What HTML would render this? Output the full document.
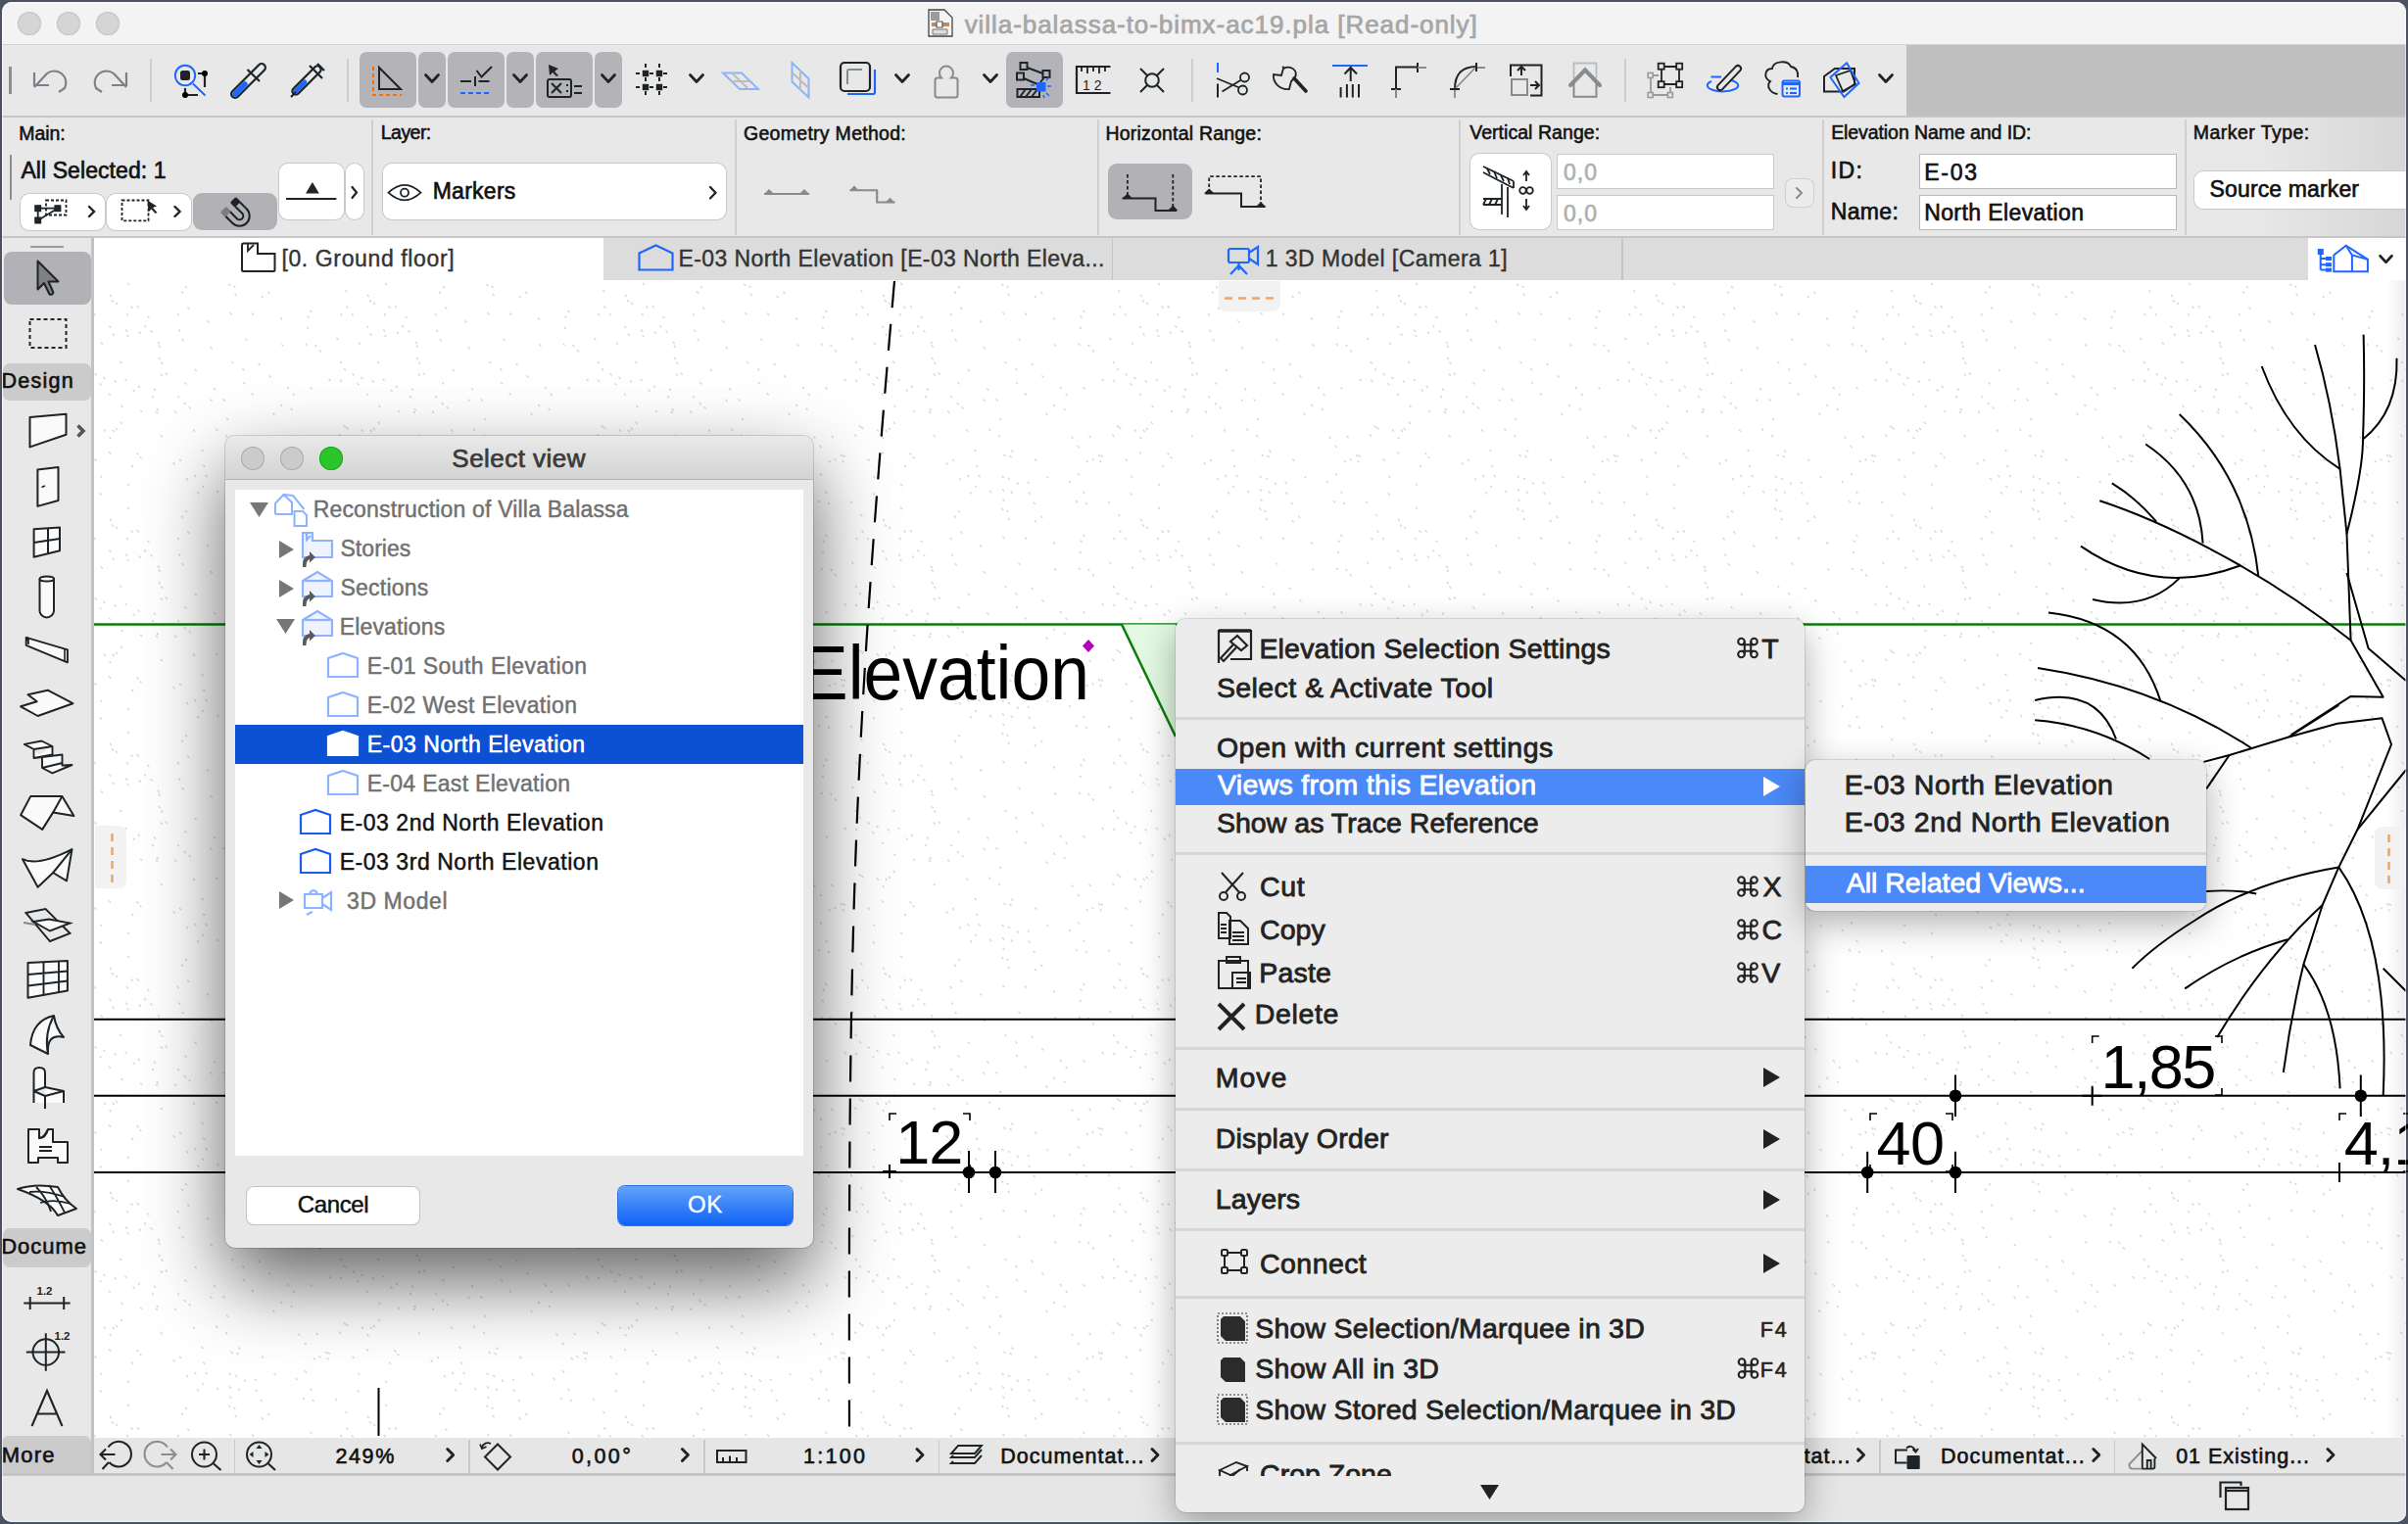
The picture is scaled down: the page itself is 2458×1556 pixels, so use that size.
<!DOCTYPE html>
<html><head><meta charset="utf-8"><title>ArchiCAD</title>
<style>
html,body{margin:0;padding:0;width:2458px;height:1556px;overflow:hidden;background:#4b5363;}
body{position:relative;font-family:"Liberation Sans",sans-serif;}
svg{overflow:visible}
</style></head><body>
<div style="position:absolute;left:2px;top:2px;width:2454px;height:1552px;border-radius:10px;overflow:hidden;background:#e6e6e6;">
<div style="position:absolute;left:0px;top:0px;width:2454px;height:43px;background:#f3f3f3;"></div>
<div style="position:absolute;left:0px;top:43px;width:2454px;height:1px;background:#d2d2d2;"></div>
<div style="position:absolute;left:0px;top:44px;width:2454px;height:72px;background:#e8e8e8;"></div>
<div style="position:absolute;left:1944px;top:44px;width:510px;height:72px;background:#bfbfbf;"></div>
<div style="position:absolute;left:0px;top:116px;width:2454px;height:2px;background:#c6c6c6;"></div>
<div style="position:absolute;left:0px;top:118px;width:2454px;height:121px;background:#e8e8e8;"></div>
<div style="position:absolute;left:2300px;top:118px;width:154px;height:121px;background:linear-gradient(to right,#e8e8e8,#d6d6d6);"></div>
<div style="position:absolute;left:0px;top:239px;width:2454px;height:2px;background:#c6c6c6;"></div>
<div style="position:absolute;left:94px;top:241px;width:2360px;height:44px;background:#dcdcdc;"></div>
<div style="position:absolute;left:0px;top:241px;width:91px;height:1265px;background:#e8e8e8;"></div>
<div style="position:absolute;left:91px;top:241px;width:3px;height:1265px;background:#c3c3c3;"></div>
<div style="position:absolute;left:94px;top:284px;width:2360px;height:1182px;background:#ffffff;"></div>
<div style="position:absolute;left:94px;top:1466px;width:2360px;height:37px;background:#e6e6e6;"></div>
<div style="position:absolute;left:0px;top:1502px;width:2454px;height:3px;background:#c4c4c4;"></div>
<div style="position:absolute;left:0px;top:1505px;width:2454px;height:47px;background:#e6e6e6;"></div>
</div>
<div style="position:absolute;left:18px;top:12px;width:24px;height:24px;border-radius:50%;background:#d5d5d5;box-shadow:inset 0 0 0 1px #c3c3c3;"></div>
<div style="position:absolute;left:58px;top:12px;width:24px;height:24px;border-radius:50%;background:#d5d5d5;box-shadow:inset 0 0 0 1px #c3c3c3;"></div>
<div style="position:absolute;left:98px;top:12px;width:24px;height:24px;border-radius:50%;background:#d5d5d5;box-shadow:inset 0 0 0 1px #c3c3c3;"></div>
<svg style="position:absolute;left:947px;top:9px;" width="26" height="29" viewBox="0 0 26 29"><path d="M1 1H17L25 9V28H1Z" fill="#f4f4f4" stroke="#444" stroke-width="1.3"/><path d="M3 3H12V12H3Z" fill="#9a9a9a"/><path d="M4 14H22V18H4Z" fill="#c08a5a"/><path d="M9 13H15V19H9Z" fill="#fff" stroke="#555" stroke-width="1.2"/><path d="M5 21H20V26H5Z" fill="#ddd" stroke="#777" stroke-width="1"/></svg>
<div style="position:absolute;left:984.67px;top:11.59px;font-size:26px;line-height:26px;height:26px;white-space:nowrap;color:#a6a6a6;font-weight:normal;letter-spacing:0.950px;-webkit-text-stroke:0.73px #a6a6a6;">villa-balassa-to-bimx-ac19.pla [Read-only]</div>
<div style="position:absolute;left:152.5px;top:60px;width:2px;height:44px;background:#cdcdcd;"></div>
<div style="position:absolute;left:354px;top:60px;width:2px;height:44px;background:#cdcdcd;"></div>
<div style="position:absolute;left:1216px;top:60px;width:2px;height:44px;background:#cdcdcd;"></div>
<div style="position:absolute;left:1658px;top:60px;width:2px;height:44px;background:#cdcdcd;"></div>
<div style="position:absolute;left:9px;top:68px;width:2.5px;height:28px;background:#8e8e8e;"></div>
<div style="position:absolute;left:367px;top:53px;width:58px;height:57px;background:#b4b3b8;border-radius:7px;"></div>
<div style="position:absolute;left:427px;top:53px;width:28px;height:57px;background:#b4b3b8;border-radius:7px;"></div>
<div style="position:absolute;left:457px;top:53px;width:58px;height:57px;background:#b4b3b8;border-radius:7px;"></div>
<div style="position:absolute;left:517px;top:53px;width:28px;height:57px;background:#b4b3b8;border-radius:7px;"></div>
<div style="position:absolute;left:547px;top:53px;width:58px;height:57px;background:#b4b3b8;border-radius:7px;"></div>
<div style="position:absolute;left:607px;top:53px;width:28px;height:57px;background:#b4b3b8;border-radius:7px;"></div>
<div style="position:absolute;left:1027px;top:53px;width:58px;height:57px;background:#b4b3b8;border-radius:7px;"></div>
<svg style="position:absolute;left:0px;top:0px;pointer-events:none" width="2458" height="130" viewBox="0 0 2458 130"><g fill="none" stroke="#7b8187" stroke-width="2.2"><path d="M35 89L48 75A12 12 0 0 1 66 90L60 94"/><path d="M35 74V87H50"/><path d="M129 89L116 75A12 12 0 0 0 98 90L104 94"/><path d="M129 74V87H114"/></g><circle cx="189" cy="77" r="10.2" fill="none" stroke="#1f66ff" stroke-width="1.9"/><rect x="184" y="72" width="10" height="10" rx="2.5" fill="#1d2327"/><path d="M197 85.5L209.5 97.5" stroke="#1f66ff" stroke-width="1.9"/><path d="M189 90V97H202M202 75H209V89" stroke="#1d2327" stroke-width="2.2" fill="none"/><circle cx="189" cy="97" r="3"/><circle cx="209" cy="75" r="3"/><path d="M240 96L267 69" stroke="#1d2327" stroke-width="10" stroke-linecap="round"/><path d="M240 96L267 69" stroke="#e8e8e8" stroke-width="5.5" stroke-linecap="round"/><path d="M240 96L250 86" stroke="#1f66ff" stroke-width="5.5" stroke-linecap="round"/><path d="M252.5 71L265 83" stroke="#1d2327" stroke-width="2.2"/><path d="M302 93L324 71" stroke="#1d2327" stroke-width="9.5" stroke-linecap="round"/><path d="M302 93L324 71" stroke="#e8e8e8" stroke-width="5" stroke-linecap="round"/><path d="M302 93L311 84" stroke="#1f66ff" stroke-width="5" stroke-linecap="round"/><path d="M297 99L302 94M316 67L329 80M324 65L331 72" stroke="#1d2327" stroke-width="2.2"/><path d="M381 68V97H410" fill="none" stroke="#ff6a00" stroke-width="2" stroke-dasharray="4 3"/><path d="M387 69V91H409Z" fill="none" stroke="#1d2327" stroke-width="2"/><path d="M434.5 76.5L441 83.5L447.5 76.5" fill="none" stroke="#222" stroke-width="2.8" stroke-linecap="round" stroke-linejoin="round"/><path d="M524.5 76.5L531 83.5L537.5 76.5" fill="none" stroke="#222" stroke-width="2.8" stroke-linecap="round" stroke-linejoin="round"/><path d="M614.5 76.5L621 83.5L627.5 76.5" fill="none" stroke="#222" stroke-width="2.8" stroke-linecap="round" stroke-linejoin="round"/><path d="M470 83H481M488.5 83H499.5M485 78V88" stroke="#1d2327" stroke-width="2"/><path d="M486.5 72L491.5 78.5L502 68" fill="none" stroke="#1d2327" stroke-width="2"/><path d="M470 95H500" stroke="#1f66ff" stroke-width="2" stroke-dasharray="5 3"/><path d="M560 66L570 70L566 73L570 77L568 78L564 74L561 77Z" fill="#1d2327"/><rect x="559" y="81" width="24" height="18" rx="2" fill="none" stroke="#1d2327" stroke-width="2"/><path d="M563 85L573 95M573 85L563 95" stroke="#1d2327" stroke-width="2"/><path d="M579 86V88M579 92V94M586 88H594M586 95H594" stroke="#1d2327" stroke-width="2"/><path d="M649 75H683M649 89H683M659 65V99M673 65V99" stroke="#1d2327" stroke-width="2" stroke-dasharray="4 3"/><rect x="655.8" y="71.8" width="6.4" height="6.4" fill="#1d2327"/><rect x="655.8" y="85.8" width="6.4" height="6.4" fill="#1d2327"/><rect x="669.8" y="71.8" width="6.4" height="6.4" fill="#1d2327"/><rect x="669.8" y="85.8" width="6.4" height="6.4" fill="#1d2327"/><path d="M704.5 76.5L711 83.5L717.5 76.5" fill="none" stroke="#222" stroke-width="2.8" stroke-linecap="round" stroke-linejoin="round"/><path d="M738 74.5H757L774 91H755Z" fill="none" stroke="#8ab4f8" stroke-width="2"/><path d="M746 83H765M747 74.5L764 91" stroke="#bdbdbd" stroke-width="2"/><path d="M808.5 64V83.5L825.5 99.5V80.5Z" fill="none" stroke="#8ab4f8" stroke-width="2"/><path d="M808.5 74L825.5 90M817 72V92" stroke="#bdbdbd" stroke-width="2"/><rect x="858" y="64" width="30" height="29" rx="4" fill="none" stroke="#1d2327" stroke-width="2.2"/><path d="M865 96H891A2 2 0 0 0 893 94V71" fill="none" stroke="#1f66ff" stroke-width="2.2"/><path d="M865 86V73A2 2 0 0 1 867 71H880" fill="none" stroke="#868b8e" stroke-width="2"/><path d="M914.5 76.5L921 83.5L927.5 76.5" fill="none" stroke="#222" stroke-width="2.8" stroke-linecap="round" stroke-linejoin="round"/><path d="M961 79.5A7 7 0 1 1 971 79.5H975A2.5 2.5 0 0 1 977.5 82V97A2.5 2.5 0 0 1 975 99.5H957A2.5 2.5 0 0 1 954.5 97V82A2.5 2.5 0 0 1 957 79.5Z" fill="none" stroke="#868b8e" stroke-width="2"/><path d="M1004.5 76.5L1011 83.5L1017.5 76.5" fill="none" stroke="#222" stroke-width="2.8" stroke-linecap="round" stroke-linejoin="round"/><g fill="none" stroke="#1d2327" stroke-width="2"><rect x="1041.5" y="64" width="7" height="7"/><rect x="1064.5" y="72" width="7" height="7"/><rect x="1038" y="74.5" width="7" height="7"/><path d="M1048.5 69L1064.5 75M1045 80L1059 86M1066 79L1062 84"/><rect x="1038.5" y="91" width="22.5" height="8"/><path d="M1041 99L1047 91M1047 99L1053 91M1053 99L1059 91"/></g><rect x="1058" y="84" width="9.5" height="9.5" fill="#1f66ff"/><path d="M1052 87H1056M1069 88H1073M1068 82L1071 79M1068 95L1071 98M1065 97L1066 100" stroke="#1f66ff" stroke-width="1.6"/><path d="M1133.5 68H1099V95H1133.5" fill="none" stroke="#1d2327" stroke-width="2.2"/><path d="M1104 68V73M1110 68V75M1116 68V73M1122 68V75M1128 68V73" stroke="#1d2327" stroke-width="1.8"/><text x="1105" y="92" font-size="14" font-family="Liberation Sans" fill="#1d2327">1 2</text><circle cx="1176" cy="82" r="6.8" fill="none" stroke="#1d2327" stroke-width="2"/><path d="M1164 70L1171 77M1181 87L1188 94M1188 70L1181 77M1171 87L1164 94" stroke="#1d2327" stroke-width="2"/><path d="M1243 64V74" stroke="#1f66ff" stroke-width="2"/><path d="M1243 85.5V99.5" stroke="#1d2327" stroke-width="2"/><path d="M1242 80L1265 89.5M1247.5 93.5L1267 81.5" stroke="#1d2327" stroke-width="1.8"/><circle cx="1270.5" cy="79" r="4.5" fill="none" stroke="#1d2327" stroke-width="1.8"/><circle cx="1268.5" cy="92" r="4.5" fill="none" stroke="#1d2327" stroke-width="1.8"/><path d="M1309 68L1312 70M1310 70C1318 66 1325 72 1322 79L1318 83L1316 91C1306 92 1299 84 1300 76L1308 77Z" fill="none" stroke="#1d2327" stroke-width="1.8"/><path d="M1321 80L1333 93" stroke="#1d2327" stroke-width="3.6" stroke-linecap="round"/><path d="M1360 67H1396" stroke="#1f66ff" stroke-width="2"/><path d="M1378.7 83V68M1372.5 75.5L1378.7 69L1385 75.5" fill="none" stroke="#1d2327" stroke-width="2"/><path d="M1368.6 89V99.6M1374.9 86V99.6M1380.8 86V99.6M1387 86V99.6" stroke="#1d2327" stroke-width="2"/><path d="M1425 91V68.5H1447" fill="none" stroke="#1d2327" stroke-width="2"/><path d="M1447 64V74M1420 91H1430" stroke="#1d2327" stroke-width="2"/><path d="M1447 69H1456M1425 91V100" stroke="#868b8e" stroke-width="2"/><path d="M1485 91Q1485 68 1507 68" fill="none" stroke="#1d2327" stroke-width="2"/><path d="M1485 91L1507 68M1507 69H1516M1485 91V100" stroke="#868b8e" stroke-width="1.8"/><path d="M1507 64V73M1480 91H1490" stroke="#1d2327" stroke-width="2"/><path d="M1542 78V66.5H1573.5V97.5H1562" fill="none" stroke="#1d2327" stroke-width="2"/><rect x="1543" y="81" width="16" height="16" fill="none" stroke="#868b8e" stroke-width="2"/><path d="M1553 77V68M1549 72L1553 68L1557 72M1562 87H1571M1567 83L1571 87L1567 91" fill="none" stroke="#1d2327" stroke-width="2"/><path d="M1606.5 80V64.5H1629.5V80" fill="none" stroke="#b9bcbe" stroke-width="1.8"/><path d="M1606.5 83V98.8H1629.5V83" fill="none" stroke="#868b8e" stroke-width="2"/><path d="M1603 87L1618 71.5L1633 87" fill="none" stroke="#868b8e" stroke-width="4" stroke-linecap="round"/><path d="M1685 77H1693M1685 77V97H1705V89" fill="none" stroke="#9a9a9a" stroke-width="1.8"/><g fill="none" stroke="#1d2327" stroke-width="1.8"><path d="M1696 68H1714V86H1696Z"/></g><rect x="1692.7" y="64.7" width="6" height="6" fill="#e8e8e8" stroke="#1d2327" stroke-width="1.8"/><rect x="1711.2" y="64.7" width="6" height="6" fill="#e8e8e8" stroke="#1d2327" stroke-width="1.8"/><rect x="1692.7" y="83.2" width="6" height="6" fill="#e8e8e8" stroke="#1d2327" stroke-width="1.8"/><rect x="1711.2" y="83.2" width="6" height="6" fill="#e8e8e8" stroke="#1d2327" stroke-width="1.8"/><rect x="1682.2" y="74.4" width="5" height="5" fill="#e8e8e8" stroke="#9a9a9a" stroke-width="1.6"/><rect x="1682.2" y="94.5" width="5" height="5" fill="#e8e8e8" stroke="#9a9a9a" stroke-width="1.6"/><rect x="1702.4" y="94.5" width="5" height="5" fill="#e8e8e8" stroke="#9a9a9a" stroke-width="1.6"/><path d="M1747 83A15.7 6.2 0 1 0 1767 82" fill="none" stroke="#1f66ff" stroke-width="2"/><path d="M1746.5 78.5H1757" stroke="#1f66ff" stroke-width="2"/><path d="M1756 89L1774 70" stroke="#1d2327" stroke-width="8" stroke-linecap="round"/><path d="M1756 89L1774 70" stroke="#e8e8e8" stroke-width="4" stroke-linecap="round"/><path d="M1814.5 96C1806 95 1803 87 1807 83C1800 80 1801 70 1809 70C1810 62 1825 61 1828 68C1834 69 1836 74 1835 79" fill="none" stroke="#1d2327" stroke-width="1.9"/><rect x="1819.5" y="82.5" width="17.5" height="16" rx="2" fill="#e8e8e8" stroke="#1f66ff" stroke-width="2"/><path d="M1820 85.5H1837" stroke="#1f66ff" stroke-width="3"/><path d="M1823 90.5H1825M1827 90.5H1834M1823 95H1825M1827 95H1834" stroke="#1f66ff" stroke-width="1.8"/><path d="M1862 93.5V78L1873 70H1893V86L1882 93.5Z" fill="none" stroke="#1d2327" stroke-width="2"/><path d="M1874 77L1889 72L1894 86L1881 93Z" fill="none" stroke="#1d2327" stroke-width="1.8"/><path d="M1885 64.3L1897.5 85L1882.4 99L1868.4 79Z" fill="none" stroke="#1f66ff" stroke-width="2"/><path d="M1918.5 76.5L1925 83.5L1931.5 76.5" fill="none" stroke="#222" stroke-width="2.8" stroke-linecap="round" stroke-linejoin="round"/></svg>
<div style="position:absolute;left:379px;top:122px;width:2px;height:118px;background:#cfcfcf;"></div>
<div style="position:absolute;left:750px;top:122px;width:2px;height:118px;background:#cfcfcf;"></div>
<div style="position:absolute;left:1120px;top:122px;width:2px;height:118px;background:#cfcfcf;"></div>
<div style="position:absolute;left:1489px;top:122px;width:2px;height:118px;background:#cfcfcf;"></div>
<div style="position:absolute;left:1860px;top:122px;width:2px;height:118px;background:#cfcfcf;"></div>
<div style="position:absolute;left:2229.5px;top:122px;width:2px;height:118px;background:#cfcfcf;"></div>
<div style="position:absolute;left:19.24px;top:126.69px;font-size:19.5px;line-height:19.5px;height:19.5px;white-space:nowrap;color:#111;font-weight:normal;letter-spacing:-0.091px;-webkit-text-stroke:0.55px #111;">Main:</div>
<div style="position:absolute;left:388.84px;top:126.49px;font-size:19.5px;line-height:19.5px;height:19.5px;white-space:nowrap;color:#111;font-weight:normal;letter-spacing:-0.559px;-webkit-text-stroke:0.55px #111;">Layer:</div>
<div style="position:absolute;left:759.02px;top:127.09px;font-size:19.5px;line-height:19.5px;height:19.5px;white-space:nowrap;color:#111;font-weight:normal;letter-spacing:0.285px;-webkit-text-stroke:0.55px #111;">Geometry Method:</div>
<div style="position:absolute;left:1128.44px;top:127.09px;font-size:19.5px;line-height:19.5px;height:19.5px;white-space:nowrap;color:#111;font-weight:normal;letter-spacing:0.207px;-webkit-text-stroke:0.55px #111;">Horizontal Range:</div>
<div style="position:absolute;left:1500.20px;top:126.09px;font-size:19.5px;line-height:19.5px;height:19.5px;white-space:nowrap;color:#111;font-weight:normal;letter-spacing:0.046px;-webkit-text-stroke:0.55px #111;">Vertical Range:</div>
<div style="position:absolute;left:1869.14px;top:126.09px;font-size:19.5px;line-height:19.5px;height:19.5px;white-space:nowrap;color:#111;font-weight:normal;letter-spacing:-0.076px;-webkit-text-stroke:0.55px #111;">Elevation Name and ID:</div>
<div style="position:absolute;left:2238.84px;top:126.09px;font-size:19.5px;line-height:19.5px;height:19.5px;white-space:nowrap;color:#111;font-weight:normal;letter-spacing:0.448px;-webkit-text-stroke:0.55px #111;">Marker Type:</div>
<div style="position:absolute;left:9.5px;top:158px;width:2.5px;height:46px;background:#8e8e8e;"></div>
<div style="position:absolute;left:21.39px;top:162.53px;font-size:23px;line-height:23px;height:23px;white-space:nowrap;color:#111;font-weight:normal;letter-spacing:0.084px;-webkit-text-stroke:0.64px #111;">All Selected: 1</div>
<div style="position:absolute;left:21px;top:197.5px;width:86px;height:37.5px;background:#fff;border-radius:9px;box-shadow:0 0 0 1px #c9c9c9,0 1px 1px rgba(0,0,0,0.08);"></div>
<div style="position:absolute;left:109px;top:197.5px;width:85.5px;height:37.5px;background:#fff;border-radius:9px;box-shadow:0 0 0 1px #c9c9c9,0 1px 1px rgba(0,0,0,0.08);"></div>
<div style="position:absolute;left:197px;top:197px;width:85.5px;height:37.5px;background:#b2b1b6;border-radius:9px;"></div>
<div style="position:absolute;left:285px;top:166.5px;width:66px;height:57.80000000000001px;background:#fff;border-radius:9px;box-shadow:0 0 0 1px #c9c9c9,0 1px 1px rgba(0,0,0,0.08);"></div>
<div style="position:absolute;left:353px;top:166.5px;width:18px;height:57.80000000000001px;background:#fff;border-radius:9px;box-shadow:0 0 0 1px #c9c9c9,0 1px 1px rgba(0,0,0,0.08);"></div>
<div style="position:absolute;left:391px;top:166.8px;width:350px;height:57.5px;background:#fff;border-radius:9px;box-shadow:0 0 0 1px #c9c9c9,0 1px 1px rgba(0,0,0,0.08);"></div>
<div style="position:absolute;left:441.66px;top:183.83px;font-size:23px;line-height:23px;height:23px;white-space:nowrap;color:#111;font-weight:normal;letter-spacing:0.269px;-webkit-text-stroke:0.64px #111;">Markers</div>
<div style="position:absolute;left:1501px;top:157px;width:82px;height:77px;background:#fff;border-radius:9px;box-shadow:0 0 0 1px #c9c9c9,0 1px 1px rgba(0,0,0,0.08);"></div>
<div style="position:absolute;left:1590px;top:157.6px;width:220px;height:34.6px;background:#fff;box-shadow:0 0 0 1px #c9c9c9;"></div>
<div style="position:absolute;left:1596.08px;top:164.63px;font-size:23px;line-height:23px;height:23px;white-space:nowrap;color:#b0b0b0;font-weight:normal;letter-spacing:0.935px;-webkit-text-stroke:0.64px #b0b0b0;">0,0</div>
<div style="position:absolute;left:1590px;top:199.5px;width:220px;height:34.6px;background:#fff;box-shadow:0 0 0 1px #c9c9c9;"></div>
<div style="position:absolute;left:1596.08px;top:206.53px;font-size:23px;line-height:23px;height:23px;white-space:nowrap;color:#b0b0b0;font-weight:normal;letter-spacing:0.935px;-webkit-text-stroke:0.64px #b0b0b0;">0,0</div>
<div style="position:absolute;left:1822.5px;top:183px;width:28.5px;height:28px;background:#ececec;border-radius:7px;box-shadow:0 0 0 1px #d0d0d0,0 1px 1px rgba(0,0,0,0.08);"></div>
<div style="position:absolute;left:1868.63px;top:162.53px;font-size:23px;line-height:23px;height:23px;white-space:nowrap;color:#111;font-weight:normal;letter-spacing:1.407px;-webkit-text-stroke:0.64px #111;">ID:</div>
<div style="position:absolute;left:1868.86px;top:204.53px;font-size:23px;line-height:23px;height:23px;white-space:nowrap;color:#111;font-weight:normal;letter-spacing:0.294px;-webkit-text-stroke:0.64px #111;">Name:</div>
<div style="position:absolute;left:1959.5px;top:157.6px;width:261px;height:34.6px;background:#fff;box-shadow:0 0 0 1px #b9b9b9;"></div>
<div style="position:absolute;left:1959.5px;top:199.5px;width:261px;height:34.6px;background:#fff;box-shadow:0 0 0 1px #b9b9b9;"></div>
<div style="position:absolute;left:1964.16px;top:164.53px;font-size:23px;line-height:23px;height:23px;white-space:nowrap;color:#111;font-weight:normal;letter-spacing:1.782px;-webkit-text-stroke:0.64px #111;">E-03</div>
<div style="position:absolute;left:1964.16px;top:206.03px;font-size:23px;line-height:23px;height:23px;white-space:nowrap;color:#111;font-weight:normal;letter-spacing:0.402px;-webkit-text-stroke:0.64px #111;">North Elevation</div>
<div style="position:absolute;left:2230px;top:165px;width:226px;height:60px;overflow:hidden;">
<div style="position:absolute;left:10px;top:10px;width:260px;height:38px;background:linear-gradient(to right,#fff 80%,#f0f0f0);border-radius:9px;box-shadow:0 0 0 1px #c9c9c9,0 1px 1px rgba(0,0,0,0.08);"></div>
</div>
<div style="position:absolute;left:1131px;top:166.6px;width:86px;height:57.4px;background:#b2b1b6;border-radius:9px;"></div>
<div style="position:absolute;left:2255.57px;top:182.03px;font-size:23px;line-height:23px;height:23px;white-space:nowrap;color:#111;font-weight:normal;letter-spacing:0.135px;-webkit-text-stroke:0.64px #111;">Source marker</div>
<svg style="position:absolute;left:0px;top:0px;pointer-events:none" width="2458" height="260" viewBox="0 0 2458 260"><rect x="47" y="204.5" width="20.5" height="15" fill="none" stroke="#1d2327" stroke-width="1.8" stroke-dasharray="3 2"/><path d="M38.7 212.7H58.9M38.7 212.7V225M38.7 225L58.9 212.7" stroke="#1d2327" stroke-width="1.8"/><rect x="35.2" y="209.2" width="7" height="7" fill="#1d2327"/><rect x="55.4" y="209.2" width="7" height="7" fill="#1d2327"/><rect x="35.2" y="221.5" width="7" height="7" fill="#1d2327"/><path d="M91 211L96 216L91 221" fill="none" stroke="#1d2327" stroke-width="2.4" stroke-linecap="round"/><path d="M178.5 211L183.5 216L178.5 221" fill="none" stroke="#1d2327" stroke-width="2.4" stroke-linecap="round"/><rect x="124.5" y="204.5" width="27" height="20.8" fill="none" stroke="#1d2327" stroke-width="1.8" stroke-dasharray="3 2"/><path d="M150.5 204.5L160 210.5L156 212L160.5 217L158.5 218L154.5 213.5L151.5 216.5Z" fill="#1d2327"/><g transform="translate(244.5,220.5) rotate(45)"><path d="M-10 -7H0A7 7 0 0 1 0 7H-10" fill="none" stroke="#1d2327" stroke-width="8.5"/><path d="M-10.5 -7H0A7 7 0 0 1 0 7H-10.5" fill="none" stroke="#b2b1b6" stroke-width="4.4"/><rect x="-16.5" y="-11.25" width="7" height="8.5" rx="1.5" fill="#1d2327"/><rect x="-16.5" y="2.75" width="7" height="8.5" rx="1.5" fill="#7d7d80"/></g><path d="M318.9 186L325.8 197.6H312Z" fill="#1d2327"/><path d="M292 203H343.4" stroke="#1d2327" stroke-width="2"/><path d="M359.5 191L364 196.5L359.5 202" fill="none" stroke="#1d2327" stroke-width="2.2" stroke-linecap="round"/><path d="M396.5 196.7Q413 181 429.5 196.7Q413 212 396.5 196.7Z" fill="none" stroke="#1d2327" stroke-width="1.8"/><circle cx="413" cy="196.7" r="4" fill="none" stroke="#1d2327" stroke-width="1.8"/><path d="M725 191L730.5 196.7L725 202.5" fill="none" stroke="#1d2327" stroke-width="2.2" stroke-linecap="round"/><path d="M780 198H826" stroke="#868b8e" stroke-width="2"/><path d="M780 198L785 193L790 198ZM816 198L821 193L826 198Z" fill="#868b8e"/><path d="M867.5 194.3H895.2V206.6H913.6" fill="none" stroke="#868b8e" stroke-width="2"/><path d="M867.5 194.3L872 189.5L876.5 194.3ZM904 206.6L908.5 201.8L913 206.6Z" fill="#868b8e"/><path d="M895.2 196V205" stroke="#868b8e" stroke-width="2" stroke-dasharray="2 2"/><path d="M1150.9 178V202M1197.3 178V214" stroke="#1d2327" stroke-width="1.8" stroke-dasharray="3.5 2.5"/><path d="M1145.6 202.6H1179.5V214.9H1201" fill="none" stroke="#1d2327" stroke-width="2"/><path d="M1145.6 202.6L1151 197.5L1156 202.6ZM1192 214.9L1197.3 209.8L1202.5 214.9Z" fill="#1d2327"/><path d="M1234.2 197V180.1H1287V210.3" fill="none" stroke="#1d2327" stroke-width="1.8" stroke-dasharray="3.5 2.5"/><path d="M1230.2 197.4H1267V210.9H1291.6" fill="none" stroke="#1d2327" stroke-width="2"/><path d="M1229 197.4L1234.2 192.5L1239.5 197.4ZM1282 210.9L1287 206L1292 210.9Z" fill="#1d2327"/><g fill="none" stroke="#1d2327" stroke-width="1.8"><path d="M1514 170L1545 185M1514 176L1545 192M1545 185V192"/><path d="M1518 172L1521 178M1525 175L1528 182M1532 179L1535 185M1539 182L1541 188"/><path d="M1533 188V219M1539 191V222"/><path d="M1514 203H1533M1514 209H1533"/><path d="M1517 203L1514 209M1523 203L1520 209M1529 203L1526 209"/><path d="M1558 176V185M1555 179L1558 175L1561 179M1558 203V214M1555 210L1558 214L1561 210"/><circle cx="1554.5" cy="194.5" r="3.3"/><circle cx="1561.5" cy="194.5" r="3.3"/></g><path d="M1834 192L1839 197L1834 202" fill="none" stroke="#8a8a8a" stroke-width="2" stroke-linecap="round"/></svg>
<svg style="position:absolute;left:96px;top:286px;overflow:hidden" width="2360" height="1182" viewBox="0 0 2360 1182"><defs><pattern id="dots" width="263" height="229" patternUnits="userSpaceOnUse"><g stroke="#d9d9d9" stroke-width="1.5" stroke-linecap="round"><path d="M85.2 34.5l1.1 1.1" /><path d="M171.2 16.6l1.1 1.1" /><path d="M140.9 83.7l1.1 1.1" /><path d="M15.3 116.2l1.1 1.1" /><path d="M9.9 99.3l1.1 1.1" /><path d="M18.4 20.8l1.1 1.1" /><path d="M111.6 189.3l1.1 1.1" /><path d="M32.6 51.1l1.1 1.1" /><path d="M165.0 217.0l1.1 1.1" /><path d="M151.8 90.8l1.1 1.1" /><path d="M256.8 10.7l1.1 1.1" /><path d="M225.8 66.3l1.1 1.1" /><path d="M37.9 27.0l1.1 1.1" /><path d="M81.1 186.9l1.1 1.1" /><path d="M47.5 133.2l1.1 1.1" /><path d="M168.0 85.3l1.1 1.1" /><path d="M144.1 14.4l1.1 1.1" /><path d="M15.7 47.2l1.1 1.1" /><path d="M178.9 97.9l1.1 1.1" /><path d="M82.6 134.1l1.1 1.1" /><path d="M119.2 68.6l1.1 1.1" /><path d="M208.9 160.1l1.1 1.1" /><path d="M64.2 131.5l1.1 1.1" /><path d="M138.1 200.4l1.1 1.1" /><path d="M191.8 65.9l1.1 1.1" /><path d="M257.8 27.0l1.1 1.1" /><path d="M110.0 173.4l1.1 1.1" /><path d="M40.0 112.0l1.1 1.1" /><path d="M10.3 153.0l1.1 1.1" /><path d="M201.1 131.2l1.1 1.1" /><path d="M230.3 71.8l1.1 1.1" /><path d="M182.9 136.1l1.1 1.1" /><path d="M152.5 104.5l1.1 1.1" /><path d="M220.9 216.3l1.1 1.1" /><path d="M124.7 152.1l1.1 1.1" /><path d="M16.0 160.6l1.1 1.1" /><path d="M170.2 227.4l1.1 1.1" /><path d="M216.2 65.2l1.1 1.1" /><path d="M101.5 153.1l1.1 1.1" /><path d="M5.9 105.7l1.1 1.1" /><path d="M44.2 26.8l1.1 1.1" /><path d="M15.5 175.9l1.1 1.1" /><path d="M34.0 56.7l1.1 1.1" /><path d="M102.8 199.6l1.1 1.1" /><path d="M21.2 102.9l1.1 1.1" /><path d="M144.5 202.3l1.1 1.1" /><path d="M215.5 197.9l1.1 1.1" /><path d="M73.2 95.1l1.1 1.1" /><path d="M94.4 202.5l1.1 1.1" /><path d="M251.9 34.6l1.1 1.1" /><path d="M46.3 53.1l1.1 1.1" /><path d="M61.4 111.1l1.1 1.1" /><path d="M154.9 60.2l1.1 1.1" /><path d="M1.1 95.9l1.1 1.1" /><path d="M97.1 129.7l1.1 1.1" /><path d="M250.7 158.1l1.1 1.1" /><path d="M135.6 141.4l1.1 1.1" /><path d="M177.8 12.4l1.1 1.1" /><path d="M236.6 178.6l1.1 1.1" /><path d="M230.0 182.7l1.1 1.1" /><path d="M103.2 91.4l1.1 1.1" /><path d="M27.2 145.3l1.1 1.1" /><path d="M16.4 15.4l1.1 1.1" /><path d="M54.9 37.2l1.1 1.1" /><path d="M89.4 12.0l1.1 1.1" /><path d="M0.1 34.6l1.1 1.1" /><path d="M26.7 83.3l1.1 1.1" /><path d="M6.7 200.2l1.1 1.1" /><path d="M161.5 34.0l1.1 1.1" /><path d="M66.3 79.6l1.1 1.1" /><path d="M95.8 28.1l1.1 1.1" /><path d="M223.3 227.4l1.1 1.1" /><path d="M122.6 110.8l1.1 1.1" /><path d="M22.6 23.4l1.1 1.1" /><path d="M90.1 60.6l1.1 1.1" /><path d="M218.0 37.0l1.1 1.1" /><path d="M6.1 217.8l1.1 1.1" /><path d="M138.9 33.6l1.1 1.1" /><path d="M142.9 6.2l1.1 1.1" /><path d="M138.9 224.1l1.1 1.1" /><path d="M227.1 159.4l1.1 1.1" /><path d="M68.7 84.0l1.1 1.1" /><path d="M43.9 176.8l1.1 1.1" /><path d="M140.1 178.4l1.1 1.1" /><path d="M86.7 51.1l1.1 1.1" /><path d="M213.4 225.5l1.1 1.1" /><path d="M224.2 184.6l1.1 1.1" /><path d="M215.2 169.4l1.1 1.1" /><path d="M59.6 118.5l1.1 1.1" /><path d="M93.5 6.6l1.1 1.1" /><path d="M7.3 64.0l1.1 1.1" /><path d="M68.2 158.6l1.1 1.1" /><path d="M251.6 102.4l1.1 1.1" /><path d="M246.4 226.3l1.1 1.1" /><path d="M251.2 83.5l1.1 1.1" /><path d="M58.0 51.9l1.1 1.1" /><path d="M51.7 46.8l1.1 1.1" /><path d="M164.1 206.2l1.1 1.1" /><path d="M221.0 109.8l1.1 1.1" /><path d="M171.7 183.1l1.1 1.1" /><path d="M22.3 151.3l1.1 1.1" /><path d="M239.3 179.1l1.1 1.1" /><path d="M197.3 109.5l1.1 1.1" /><path d="M47.0 180.7l1.1 1.1" /><path d="M87.5 183.4l1.1 1.1" /><path d="M255.5 90.6l1.1 1.1" /><path d="M105.6 216.8l1.1 1.1" /><path d="M190.6 38.9l1.1 1.1" /><path d="M33.4 34.6l1.1 1.1" /><path d="M238.0 184.7l1.1 1.1" /><path d="M38.4 189.3l1.1 1.1" /><path d="M257.8 150.5l1.1 1.1" /><path d="M92.2 125.6l1.1 1.1" /><path d="M34.4 3.3l1.1 1.1" /><path d="M255.3 148.8l1.1 1.1" /><path d="M138.5 213.8l1.1 1.1" /><path d="M114.1 199.6l1.1 1.1" /><path d="M217.3 48.3l1.1 1.1" /><path d="M66.2 67.1l1.1 1.1" /><path d="M63.3 134.3l1.1 1.1" /><path d="M68.2 96.0l1.1 1.1" /><path d="M34.5 208.4l1.1 1.1" /><path d="M93.0 104.9l1.1 1.1" /><path d="M153.4 207.1l1.1 1.1" /><path d="M110.6 210.2l1.1 1.1" /><path d="M131.9 121.8l1.1 1.1" /><path d="M137.7 4.3l1.1 1.1" /><path d="M115.8 41.9l1.1 1.1" /><path d="M1.0 183.0l1.1 1.1" /><path d="M45.3 108.4l1.1 1.1" /><path d="M190.7 127.4l1.1 1.1" /><path d="M85.7 118.7l1.1 1.1" /><path d="M146.1 179.6l1.1 1.1" /><path d="M27.9 128.3l1.1 1.1" /><path d="M65.4 63.4l1.1 1.1" /><path d="M203.1 116.3l1.1 1.1" /><path d="M147.7 174.0l1.1 1.1" /><path d="M240.0 101.5l1.1 1.1" /><path d="M161.1 115.8l1.1 1.1" /><path d="M134.7 158.6l1.1 1.1" /><path d="M119.0 122.1l1.1 1.1" /><path d="M125.7 215.6l1.1 1.1" /><path d="M183.9 200.7l1.1 1.1" /><path d="M247.8 59.4l1.1 1.1" /><path d="M147.2 216.0l1.1 1.1" /><path d="M220.9 31.4l1.1 1.1" /><path d="M32.0 101.2l1.1 1.1" /><path d="M19.1 55.1l1.1 1.1" /><path d="M19.2 153.3l1.1 1.1" /><path d="M206.2 205.4l1.1 1.1" /></g></pattern></defs><rect x="0" y="0" width="2360" height="1182" fill="url(#dots)"/></svg>
<div style="position:absolute;left:2436px;top:286px;width:20px;height:1182px;background:linear-gradient(to right,rgba(0,0,0,0),rgba(0,0,0,0.07));"></div>
<svg style="position:absolute;left:0px;top:0px;pointer-events:none" width="2458" height="1556" viewBox="0 0 2458 1556"><path d="M96 637.5H2456" stroke="#0a7d0a" stroke-width="2.5"/><path d="M1145 637.5L1200 637.5L1200 752Z" fill="#e3f9e3" stroke="none"/><path d="M1145 637.5L1200 752" stroke="#0a7d0a" stroke-width="2.5" fill="none"/><path d="M96 1040.8H2456" stroke="#000" stroke-width="2"/><path d="M96 1118.8H2456" stroke="#000" stroke-width="2"/><path d="M96 1197H2456" stroke="#000" stroke-width="2"/><path d="M913 287 C869.5 787, 866 966, 867 1466" stroke="#000" stroke-width="2.2" fill="none" stroke-dasharray="27 17"/><path d="M386.5 1417V1466" stroke="#000" stroke-width="2"/><path d="M1111 653L1117 659.5L1111 666L1105 659.5Z" fill="#b000b8"/><circle cx="989" cy="1197" r="6.3" fill="#000"/><circle cx="1016" cy="1197" r="6.3" fill="#000"/><path d="M989 1175V1218" stroke="#000" stroke-width="2"/><path d="M1016 1175V1218" stroke="#000" stroke-width="2"/><path d="M901 1196H915M908 1189V1203" stroke="#000" stroke-width="2"/><path d="M908 1144V1137H915M983 1137H990V1144M990 1189V1196H983M908 1189V1196" stroke="#000" stroke-width="1.6" fill="none"/><circle cx="1906.2" cy="1197" r="6.3" fill="#000"/><circle cx="1996" cy="1197" r="6.3" fill="#000"/><circle cx="1996" cy="1118.8" r="6.3" fill="#000"/><circle cx="2409.8" cy="1118.8" r="6.3" fill="#000"/><path d="M1906.2 1175.8V1218" stroke="#000" stroke-width="2"/><path d="M1996 1175.8V1218" stroke="#000" stroke-width="2"/><path d="M1996 1097.5V1140" stroke="#000" stroke-width="2"/><path d="M2409.8 1097.5V1140" stroke="#000" stroke-width="2"/><path d="M1909 1144V1137H1916M1986 1137H1993V1144M1993 1189V1196H1986M1909 1189V1196" stroke="#000" stroke-width="1.6" fill="none"/><path d="M2125.7 1118.8H2145.7M2135.7 1108.8V1128.8" stroke="#000" stroke-width="2"/><path d="M2135.7 1065V1058H2142.7M2261 1058H2268V1065M2268 1111V1118H2261M2135.7 1111V1118" stroke="#000" stroke-width="1.6" fill="none"/><path d="M2378 1197H2398M2388 1187V1207" stroke="#000" stroke-width="2"/><path d="M2388 1144V1137H2395M2453 1137H2460V1144M2460 1189V1196H2453M2388 1189V1196" stroke="#000" stroke-width="1.6" fill="none"/></svg>
<div style="position:absolute;left:789.08px;top:647.53px;font-size:78.5px;line-height:78.5px;height:78.5px;white-space:nowrap;color:#000;font-weight:normal;letter-spacing:0.000px;transform:scaleX(0.91);transform-origin:100% 0;">Elevation</div>
<div style="position:absolute;left:914.27px;top:1135.36px;font-size:63px;line-height:63px;height:63px;white-space:nowrap;color:#000;font-weight:normal;letter-spacing:-1.055px;">12</div>
<div style="position:absolute;left:1915.42px;top:1136.06px;font-size:63px;line-height:63px;height:63px;white-space:nowrap;color:#000;font-weight:normal;letter-spacing:-0.335px;">40</div>
<div style="position:absolute;left:2144.58px;top:1058.36px;font-size:63px;line-height:63px;height:63px;white-space:nowrap;color:#000;font-weight:normal;letter-spacing:-1.630px;">1,85</div>
<div style="position:absolute;left:2392.83px;top:1136.06px;font-size:63px;line-height:63px;height:63px;white-space:nowrap;color:#000;font-weight:normal;letter-spacing:-1.000px;">4,1</div>
<div style="position:absolute;left:1244px;top:287px;width:63px;height:31px;background:#f2f2f2;border-radius:0 0 8px 8px;"></div>
<svg style="position:absolute;left:1244px;top:287px;" width="63" height="31" viewBox="0 0 63 31"><path d="M6 17.5H58" stroke="#f7a35c" stroke-width="2.5" stroke-dasharray="8 6"/></svg>
<div style="position:absolute;left:97px;top:843px;width:32px;height:64px;background:#f2f2f2;border-radius:0 8px 8px 0;"></div>
<svg style="position:absolute;left:97px;top:843px;" width="32" height="64" viewBox="0 0 32 64"><path d="M17.5 8V58" stroke="#f7a35c" stroke-width="2.5" stroke-dasharray="8 6"/></svg>
<div style="position:absolute;left:2424px;top:844px;width:32px;height:64px;background:#f2f2f2;border-radius:8px 0 0 8px;"></div>
<svg style="position:absolute;left:2424px;top:844px;" width="32" height="64" viewBox="0 0 32 64"><path d="M14.5 8V58" stroke="#f7a35c" stroke-width="2.5" stroke-dasharray="8 6"/></svg>
<div style="position:absolute;left:96px;top:243px;width:520px;height:43px;background:#fff;"></div>
<div style="position:absolute;left:1134.5px;top:243px;width:1.5px;height:43px;background:#c4c4c4;"></div>
<div style="position:absolute;left:1655px;top:243px;width:1.5px;height:43px;background:#c4c4c4;"></div>
<div style="position:absolute;left:2356px;top:243px;width:100px;height:43px;background:#fff;"></div>
<div style="position:absolute;left:287.39px;top:252.93px;font-size:23px;line-height:23px;height:23px;white-space:nowrap;color:#333;font-weight:normal;letter-spacing:0.628px;-webkit-text-stroke:0.40px #333;">[0. Ground floor]</div>
<div style="position:absolute;left:692.56px;top:252.93px;font-size:23px;line-height:23px;height:23px;white-space:nowrap;color:#333;font-weight:normal;letter-spacing:0.390px;-webkit-text-stroke:0.40px #333;">E-03 North Elevation [E-03 North Eleva...</div>
<div style="position:absolute;left:1291.78px;top:252.93px;font-size:23px;line-height:23px;height:23px;white-space:nowrap;color:#333;font-weight:normal;letter-spacing:0.461px;-webkit-text-stroke:0.40px #333;">1 3D Model [Camera 1]</div>
<svg style="position:absolute;left:0px;top:230px;pointer-events:none" width="2458" height="70" viewBox="0 0 2458 70"><g transform="translate(0,-230)"><path d="M248.5 248.5H263V259H280.5V275.5A1.5 1.5 0 0 1 279 277H248.5A1.5 1.5 0 0 1 247 275.5V250A1.5 1.5 0 0 1 248.5 248.5Z" fill="none" stroke="#1d2327" stroke-width="2"/><path d="M253 249V256L259 250" fill="none" stroke="#1d2327" stroke-width="1.8"/><path d="M652.5 258.5L669.5 250.5L686.5 258.5V275.5H652.5Z" fill="none" stroke="#1f66ff" stroke-width="2.2"/><g fill="none" stroke="#1f66ff" stroke-width="2.2"><rect x="1254" y="254" width="21" height="14" rx="2"/><path d="M1275 258L1284 252V270L1275 264"/><path d="M1264.5 268V276M1264.5 271L1256 280M1264.5 271L1273 280"/></g><g fill="none" stroke="#1f66ff" stroke-width="2"><path d="M2382.3 277.3V260.5L2394.7 250.7L2416.9 264.9V277.3Z"/><path d="M2400.9 260.5V277.3M2394.7 250.7L2400.9 260.5L2416.9 264.9"/><path d="M2368.7 259V275.6M2368.7 264H2376M2368.7 270.2H2376M2368.7 275.6H2376"/></g><rect x="2365.8" y="254" width="6" height="6" fill="#1f66ff"/><rect x="2374" y="262" width="6" height="4" fill="#1f66ff"/><rect x="2374" y="268.2" width="6" height="4" fill="#1f66ff"/><rect x="2374" y="273.6" width="6" height="4" fill="#1f66ff"/><path d="M2429.5 261.25L2435.5 267.75L2441.5 261.25" fill="none" stroke="#222" stroke-width="2.6" stroke-linecap="round" stroke-linejoin="round"/></g></svg>
<div style="position:absolute;left:31px;top:251px;width:34px;height:2px;background:#9c9c9c;"></div>
<div style="position:absolute;left:3.5px;top:257px;width:89px;height:53.5px;background:#b2b1b6;border-radius:8px;"></div>
<div style="position:absolute;left:3px;top:370.5px;width:89.5px;height:38.5px;background:#cbcbcb;border-radius:7px;"></div>
<div style="position:absolute;left:1.48px;top:379.40px;font-size:21.5px;line-height:21.5px;height:21.5px;white-space:nowrap;color:#111;font-weight:normal;letter-spacing:1.250px;-webkit-text-stroke:0.60px #111;">Design</div>
<div style="position:absolute;left:3px;top:1254px;width:89.5px;height:39.5px;background:#cbcbcb;border-radius:7px;"></div>
<div style="position:absolute;left:1.24px;top:1262.17px;font-size:22px;line-height:22px;height:22px;white-space:nowrap;color:#111;font-weight:normal;letter-spacing:0.960px;-webkit-text-stroke:0.62px #111;">Docume</div>
<div style="position:absolute;left:2px;top:1466px;width:91px;height:38px;background:#cbcbcb;border-radius:7px 7px 0 0;"></div>
<div style="position:absolute;left:1.74px;top:1475.37px;font-size:22px;line-height:22px;height:22px;white-space:nowrap;color:#111;font-weight:normal;letter-spacing:1.233px;-webkit-text-stroke:0.62px #111;">More</div>
<svg style="position:absolute;left:0px;top:0px;pointer-events:none" width="100" height="1510" viewBox="0 0 100 1510"><path d="M38.5 266.5V295.5L45 289L50 299.5A2 2 0 0 0 54 297.5L49.5 287.5H59.5Z" fill="#7d8184" stroke="#1d2327" stroke-width="2" stroke-linejoin="round"/><rect x="30.5" y="326" width="37" height="29" fill="none" stroke="#1d2327" stroke-width="2" stroke-dasharray="4 3"/><path d="M30.5 426L67.5 422.8V443.8L30.5 456.4Z" fill="#fafafa" stroke="#1d2327" stroke-width="2" stroke-linejoin="round"/><path d="M79.5 434.5L85 440L79.5 445.5" fill="none" stroke="#555" stroke-width="3.6"/><path d="M38.4 479.5L59.5 477V511L38.4 516.9Z" fill="#fafafa" stroke="#1d2327" stroke-width="2" stroke-linejoin="round"/><path d="M42.5 497.5L46 496" stroke="#1d2327" stroke-width="1.6"/><path d="M34.6 540.2L61 538.4V562.3L34.6 568.7Z" fill="#fafafa" stroke="#1d2327" stroke-width="2" stroke-linejoin="round"/><path d="M49 539V566M34.6 554L61 550" stroke="#1d2327" stroke-width="2"/><path d="M40.5 591V624A7.3 7.3 0 0 0 55 624V591" fill="#fafafa" stroke="#1d2327" stroke-width="2"/><ellipse cx="47.8" cy="591" rx="7.3" ry="2.6" fill="#fafafa" stroke="#1d2327" stroke-width="2"/><path d="M26.7 650.9L68.9 663.4V676.3L26.7 658.8Z" fill="#fafafa" stroke="#1d2327" stroke-width="2" stroke-linejoin="round"/><path d="M26.7 650.9L29 651.5V658M66 662.5V676" stroke="#1d2327" stroke-width="1.6"/><path d="M28.5 709.3L48.7 704.7L74.4 718.2L38.6 731L21.1 721.3L37.7 716.3Z" fill="#fafafa" stroke="#1d2327" stroke-width="2" stroke-linejoin="round"/><path d="M24.8 759.9L42.5 756.5L53.5 762L34.5 765ZM34.5 765V774L63.5 770.5V781.5L73.5 781L53.5 789.3L43 784V774M34.5 774L53.5 770.5V762M43 784L63.5 779" fill="#fafafa" stroke="#1d2327" stroke-width="1.9" stroke-linejoin="round"/><path d="M21.1 832.2L31.3 812.9H63.4L75.4 833.1L54.2 829.4L43.2 846.9Z" fill="#fafafa" stroke="#1d2327" stroke-width="2" stroke-linejoin="round"/><path d="M63.4 812.9L54.2 829.4" stroke="#1d2327" stroke-width="2"/><path d="M23 877.2Q38 885 73.5 867.1L68 899.3L54.2 891L38.6 905.7Z" fill="#fafafa" stroke="#1d2327" stroke-width="2" stroke-linejoin="round"/><path d="M73.5 867.1L54.2 891" stroke="#1d2327" stroke-width="2"/><path d="M26.5 932L46.5 928L71.5 953L51 961Z" fill="none" stroke="#1d2327" stroke-width="1.9"/><path d="M34 941L50 938.5L71.5 942.5L51 950.5Z" fill="#fafafa" stroke="#1d2327" stroke-width="1.9"/><path d="M24 942L36 944" stroke="#888" stroke-width="1.9"/><path d="M28.5 982.9L68.9 981.1V1011.4L28.5 1018.8Z" fill="#fafafa" stroke="#1d2327" stroke-width="2" stroke-linejoin="round"/><path d="M44.5 982V1016.5M60 981.5V1013M28.5 995L68.9 991.5M28.5 1006.5L68.9 1001.5" stroke="#1d2327" stroke-width="1.9"/><path d="M55 1037Q33 1042 31 1067L49 1076Q47 1055 65 1059Q57 1050 55 1037Z" fill="#fafafa" stroke="#1d2327" stroke-width="2" stroke-linejoin="round"/><path d="M55 1037Q45 1055 49 1076" fill="none" stroke="#1d2327" stroke-width="2"/><path d="M34.5 1126V1095Q34.5 1090 40 1090Q46 1090 46 1095V1110L65 1114V1126M46 1110L34.5 1114L46 1119V1132M46 1119L65 1114" fill="#fafafa" stroke="#1d2327" stroke-width="2" stroke-linejoin="round"/><path d="M29 1153H40V1162Q45 1162 49 1153H54V1166H69V1187H59V1182H39V1187H29Z" fill="#fafafa" stroke="#1d2327" stroke-width="2" stroke-linejoin="round"/><path d="M40 1171H53M40 1175H53" stroke="#1d2327" stroke-width="1.8"/><path d="M40 1153V1162Q47 1162 49 1153" fill="none" stroke="#1d2327" stroke-width="1.8"/><path d="M18 1214Q35 1208 59 1212Q66 1226 78 1234L59 1241Q50 1225 18 1214Z" fill="#fafafa" stroke="#1d2327" stroke-width="2" stroke-linejoin="round"/><path d="M30 1217Q45 1215 66 1222M41 1228Q55 1224 72 1229M37 1212Q47 1222 52 1237M50 1210Q58 1222 66 1238" fill="none" stroke="#1d2327" stroke-width="1.8"/><path d="M24.3 1330.6H71.6M30.7 1324V1337M65.2 1324V1337" stroke="#1d2327" stroke-width="2"/><text x="37.5" y="1321.5" font-size="11.5" font-weight="bold" font-family="Liberation Sans" fill="#1d2327">1.2</text><circle cx="46.8" cy="1380.5" r="13.3" fill="none" stroke="#1d2327" stroke-width="2"/><path d="M26.9 1380.5H66.5M46.8 1361.3V1399.7" stroke="#1d2327" stroke-width="2"/><text x="55.5" y="1367.8" font-size="11.5" font-weight="bold" font-family="Liberation Sans" fill="#1d2327">1.2</text><path d="M32.5 1456L48 1420L63.5 1456M38 1443.5H58" fill="none" stroke="#1d2327" stroke-width="2.1"/></svg>
<div style="position:absolute;left:238.65px;top:1470px;width:1.5px;height:34px;background:#c9c9c9;"></div>
<div style="position:absolute;left:478.25px;top:1470px;width:1.5px;height:34px;background:#c9c9c9;"></div>
<div style="position:absolute;left:718.25px;top:1470px;width:1.5px;height:34px;background:#c9c9c9;"></div>
<div style="position:absolute;left:957.75px;top:1470px;width:1.5px;height:34px;background:#c9c9c9;"></div>
<div style="position:absolute;left:1918.05px;top:1470px;width:1.5px;height:34px;background:#c9c9c9;"></div>
<div style="position:absolute;left:2157.95px;top:1470px;width:1.5px;height:34px;background:#c9c9c9;"></div>
<div style="position:absolute;left:342.53px;top:1476.80px;font-size:21.5px;line-height:21.5px;height:21.5px;white-space:nowrap;color:#111;font-weight:normal;letter-spacing:1.596px;-webkit-text-stroke:0.60px #111;">249%</div>
<div style="position:absolute;left:583.64px;top:1476.80px;font-size:21.5px;line-height:21.5px;height:21.5px;white-space:nowrap;color:#111;font-weight:normal;letter-spacing:2.433px;-webkit-text-stroke:0.60px #111;">0,00°</div>
<div style="position:absolute;left:819.89px;top:1476.80px;font-size:21.5px;line-height:21.5px;height:21.5px;white-space:nowrap;color:#111;font-weight:normal;letter-spacing:2.331px;-webkit-text-stroke:0.60px #111;">1:100</div>
<div style="position:absolute;left:1021.28px;top:1476.80px;font-size:21.5px;line-height:21.5px;height:21.5px;white-space:nowrap;color:#111;font-weight:normal;letter-spacing:1.035px;-webkit-text-stroke:0.60px #111;">Documentat...</div>
<div style="position:absolute;left:1842px;top:1470px;width:60px;height:34px;overflow:hidden;">
<div style="position:absolute;left:-99.82px;top:6.80px;font-size:21.5px;line-height:21.5px;height:21.5px;white-space:nowrap;color:#111;font-weight:normal;letter-spacing:1.035px;-webkit-text-stroke:0.60px #111;">Documentat...</div>
</div>
<div style="position:absolute;left:1980.98px;top:1476.80px;font-size:21.5px;line-height:21.5px;height:21.5px;white-space:nowrap;color:#111;font-weight:normal;letter-spacing:1.077px;-webkit-text-stroke:0.60px #111;">Documentat...</div>
<div style="position:absolute;left:2221.14px;top:1476.80px;font-size:21.5px;line-height:21.5px;height:21.5px;white-space:nowrap;color:#111;font-weight:normal;letter-spacing:0.986px;-webkit-text-stroke:0.60px #111;">01 Existing...</div>
<svg style="position:absolute;left:0px;top:1400px;pointer-events:none" width="2458" height="156" viewBox="0 0 2458 156"><g transform="translate(0,-1400)"><path d="M456.7 1479.5L462.7 1485.5L456.7 1491.5" fill="none" stroke="#1d2327" stroke-width="2.9" stroke-linecap="round" stroke-linejoin="round"/><path d="M696.4 1479.5L702.4 1485.5L696.4 1491.5" fill="none" stroke="#1d2327" stroke-width="2.9" stroke-linecap="round" stroke-linejoin="round"/><path d="M936 1479.5L942 1485.5L936 1491.5" fill="none" stroke="#1d2327" stroke-width="2.9" stroke-linecap="round" stroke-linejoin="round"/><path d="M1176 1479.5L1182 1485.5L1176 1491.5" fill="none" stroke="#1d2327" stroke-width="2.9" stroke-linecap="round" stroke-linejoin="round"/><path d="M1896.6 1479.5L1902.6 1485.5L1896.6 1491.5" fill="none" stroke="#1d2327" stroke-width="2.9" stroke-linecap="round" stroke-linejoin="round"/><path d="M2136.8 1479.5L2142.8 1485.5L2136.8 1491.5" fill="none" stroke="#1d2327" stroke-width="2.9" stroke-linecap="round" stroke-linejoin="round"/><path d="M2376 1479.5L2382 1485.5L2376 1491.5" fill="none" stroke="#1d2327" stroke-width="2.9" stroke-linecap="round" stroke-linejoin="round"/><path d="M110.5 1477.5A12.8 12.8 0 1 1 111.5 1493" fill="none" stroke="#1d2327" stroke-width="2"/><path d="M102.5 1485H117.5M108 1479.5L102.5 1485L108 1490.5M111 1493L104.5 1500" fill="none" stroke="#1d2327" stroke-width="2.1"/><path d="M171 1477.5A12.8 12.8 0 1 0 170 1493" fill="none" stroke="#8a8e91" stroke-width="2"/><path d="M164.5 1485H179.5M174 1479.5L179.5 1485L174 1490.5M170 1493L176.5 1500" fill="none" stroke="#8a8e91" stroke-width="2.1"/><circle cx="208.5" cy="1485" r="12.5" fill="none" stroke="#1d2327" stroke-width="2"/><path d="M203 1485H214M208.5 1479.5V1490.5M217.5 1494L225.5 1501" fill="none" stroke="#1d2327" stroke-width="2.1"/><circle cx="264.5" cy="1485" r="12.5" fill="none" stroke="#1d2327" stroke-width="2"/><path d="M273.5 1494L281 1501" stroke="#1d2327" stroke-width="2.1"/><path d="M264.5 1475L261.5 1479H267.5ZM264.5 1495L261.5 1491H267.5ZM254.5 1485L258.5 1482V1488ZM274.5 1485L270.5 1482V1488Z" fill="#1d2327"/><path d="M508 1474.5L521 1487.5L508 1500.5L495 1487.5Z" fill="none" stroke="#1d2327" stroke-width="2" transform="rotate(0)"/><path d="M492 1478A6 6 0 0 1 501 1474" fill="none" stroke="#1d2327" stroke-width="1.8"/><path d="M490 1474.5L492 1479L496.5 1477" fill="none" stroke="#1d2327" stroke-width="1.8"/><path d="M732 1481H761.5V1493H732Z M738 1493V1488M745 1493V1486.5M752 1493V1488" fill="none" stroke="#1d2327" stroke-width="2"/><g fill="none" stroke="#1d2327" stroke-width="1.9"><path d="M978 1476H1002L995 1484H971Z"/><path d="M973 1486L971 1488H995L1002 1480"/><path d="M973 1492L971 1494H995L1002 1486"/></g><path d="M1947 1480.5H1935V1493.5H1946.5" fill="none" stroke="#1d2327" stroke-width="2"/><rect x="1946.5" y="1486" width="13.2" height="14" rx="1" fill="#1d2327"/><path d="M1946 1478.5Q1951 1474 1955.5 1481" fill="none" stroke="#1d2327" stroke-width="1.8"/><path d="M1952.5 1479.5L1955.5 1482.5L1958 1479" fill="none" stroke="#1d2327" stroke-width="1.8"/><path d="M2186.8 1481.2L2173.5 1495Q2173 1499.6 2177 1499.6H2186.8" fill="none" stroke="#8a8e91" stroke-width="1.9"/><path d="M2186.8 1499.6V1474.6L2201 1489M2199.4 1489V1497.6A2 2 0 0 1 2197.4 1499.6H2186.8M2191.8 1499.6V1491H2195.6V1499.6" fill="none" stroke="#1d2327" stroke-width="1.9"/><path d="M2266.5 1529V1513.5H2287.5V1517" fill="none" stroke="#1d2327" stroke-width="2.2"/><rect x="2272" y="1519" width="23" height="22" fill="none" stroke="#1d2327" stroke-width="2.2"/><path d="M2272 1522H2295" stroke="#1d2327" stroke-width="2.2"/></g></svg>
<svg style="position:absolute;left:0px;top:0px;pointer-events:none" width="2458" height="1556" viewBox="0 0 2458 1556"><g stroke="#000" stroke-width="2" fill="none" stroke-linejoin="round"><path d="M2143.3 511.3 C2200 530 2300 575 2399.6 653.8"/><path d="M2155.8 493.4 Q2180 508 2201.2 532.6"/><path d="M2190.2 453.5 Q2245 490 2248.6 554.6"/><path d="M2224.7 423 Q2295 490 2305.4 589"/><path d="M2124 557.6 Q2200 610 2286.7 577.5"/><path d="M2136 612 Q2190 625 2224.6 590.4"/><path d="M2399.6 653.8 L2395.5 545 L2388.6 478.8 Q2380 410 2363 352"/><path d="M2395.5 545 Q2412 480 2412 448.5 Q2414 390 2412.6 341.6"/><path d="M2308.7 374 Q2335 445 2388.6 478.8"/><path d="M2446.5 365.8 Q2448 420 2412 448.5"/><path d="M2395.5 585 L2417.6 662 L2456 695"/><path d="M2399.6 653.8 L2432.7 711.7 L2399.6 710.9 L2339 750"/><path d="M2091 625.4 Q2180 635 2205.4 715.8"/><path d="M2080 682 Q2200 700 2297.7 763.5"/><path d="M2077.2 715 Q2140 700 2160 754.5"/><path d="M2077.2 735.2 Q2140 740 2194.3 775"/><path d="M2249.5 777.9 L2275.6 771 L2336.3 752.5 L2385.9 738.7 L2431.4 733.2 L2441 760 L2406.5 846.8 L2387.3 885.4 L2370.7 924 L2351.4 984.6 Q2338 1040 2330.8 1094.8"/><path d="M2336.3 752.5 L2387.3 720"/><path d="M2275.6 771 L2252.2 805.4"/><path d="M2406.5 846.8 L2456 786"/><path d="M2387.3 885.4 Q2300 900 2240 940 Q2200 965 2176.4 988.7"/><path d="M2230.2 1009.4 Q2280 975 2334.9 959.2"/><path d="M2370.7 924 Q2310 980 2263.2 1059"/><path d="M2351.4 984.6 Q2385 1030 2388.6 1111.4"/><path d="M2387.3 885.4 Q2440 960 2432.7 1118.2"/><path d="M2432.7 988.7 L2456 1012"/><path d="M2252.2 910 Q2280 908 2303.2 912.4"/></g></svg>
<div style="position:absolute;left:230px;top:445px;width:600px;height:829px;border-radius:10px;box-shadow:0 34px 80px rgba(0,0,0,0.62),0 0 0 1px rgba(0,0,0,0.14);background:#e8e8e8;overflow:hidden;"></div>
<div style="position:absolute;left:230px;top:445px;width:600px;height:44px;border-radius:10px 10px 0 0;background:linear-gradient(#e9e9e9,#d3d3d3);"></div>
<div style="position:absolute;left:230px;top:489px;width:600px;height:1px;background:#b4b4b4;"></div>
<div style="position:absolute;left:246px;top:456px;width:24px;height:24px;border-radius:50%;background:#cbcbcb;box-shadow:inset 0 0 0 1px #ababab;box-sizing:border-box;"></div>
<div style="position:absolute;left:286px;top:456px;width:24px;height:24px;border-radius:50%;background:#cbcbcb;box-shadow:inset 0 0 0 1px #ababab;box-sizing:border-box;"></div>
<div style="position:absolute;left:326px;top:456px;width:24px;height:24px;border-radius:50%;background:#2ac52a;box-shadow:inset 0 0 0 1px #1fa51f;box-sizing:border-box;"></div>
<div style="position:absolute;left:461.33px;top:454.99px;font-size:26px;line-height:26px;height:26px;white-space:nowrap;color:#3a3a3a;font-weight:normal;letter-spacing:0.461px;-webkit-text-stroke:0.73px #3a3a3a;">Select view</div>
<div style="position:absolute;left:240px;top:500px;width:580px;height:680px;background:#fff;"></div>
<div style="position:absolute;left:240px;top:740px;width:580px;height:39.5px;background:#0c50d4;"></div>
<svg style="position:absolute;left:254.5px;top:513px;" width="19" height="15" viewBox="0 0 19 15"><path d="M0 0H19L9.5 15Z" fill="#777"/></svg>
<svg style="position:absolute;left:285px;top:551.5px;" width="15" height="18" viewBox="0 0 15 18"><path d="M0 0V18L15 9Z" fill="#777"/></svg>
<svg style="position:absolute;left:285px;top:591.5px;" width="15" height="18" viewBox="0 0 15 18"><path d="M0 0V18L15 9Z" fill="#777"/></svg>
<svg style="position:absolute;left:282px;top:632px;" width="19" height="15" viewBox="0 0 19 15"><path d="M0 0H19L9.5 15Z" fill="#777"/></svg>
<svg style="position:absolute;left:285px;top:909.5px;" width="15" height="18" viewBox="0 0 15 18"><path d="M0 0V18L15 9Z" fill="#777"/></svg>
<svg style="position:absolute;left:0px;top:0px;" width="2458" height="1556" viewBox="0 0 2458 1556"><g fill="none" stroke="#8db2ff" stroke-width="2"><path d="M281 525V514L289.5 505L298 513V525H281"/><path d="M290 505L299 506L310.5 520"/><path d="M300.5 522H309L313 526V537H300.5Z" fill="#fff"/></g></svg>
<div style="position:absolute;left:319.66px;top:508.53px;font-size:23px;line-height:23px;height:23px;white-space:nowrap;color:#707070;font-weight:normal;letter-spacing:0.175px;-webkit-text-stroke:0.45px #707070;">Reconstruction of Villa Balassa</div>
<svg style="position:absolute;left:305px;top:541px;" width="38" height="36" viewBox="0 0 38 36"><g fill="#eef3ff" stroke="#8db2ff" stroke-width="2.2"><path d="M4 3H14V11H34V28H4Z"/><path d="M8 4V10L12 6"/></g><path d="M4 38Q3 27 11 26V22L17 28L11 33.5V30Q7.5 31 7.5 38Z" fill="#5a5a5a"/></svg>
<div style="position:absolute;left:347.46px;top:548.53px;font-size:23px;line-height:23px;height:23px;white-space:nowrap;color:#707070;font-weight:normal;letter-spacing:0.052px;-webkit-text-stroke:0.45px #707070;">Stories</div>
<svg style="position:absolute;left:305px;top:581px;" width="38" height="36" viewBox="0 0 38 36"><g fill="#eef3ff" stroke="#8db2ff" stroke-width="2.2"><path d="M4 12L19 3L34 12V28H4Z"/><path d="M4 12H34"/></g><path d="M4 38Q3 27 11 26V22L17 28L11 33.5V30Q7.5 31 7.5 38Z" fill="#5a5a5a"/></svg>
<div style="position:absolute;left:347.46px;top:588.53px;font-size:23px;line-height:23px;height:23px;white-space:nowrap;color:#707070;font-weight:normal;letter-spacing:0.234px;-webkit-text-stroke:0.45px #707070;">Sections</div>
<svg style="position:absolute;left:305px;top:621px;" width="38" height="36" viewBox="0 0 38 36"><g fill="#eef3ff" stroke="#8db2ff" stroke-width="2.2"><path d="M4 12L19 3L34 12V28H4Z"/><path d="M4 12H34"/></g><path d="M4 38Q3 27 11 26V22L17 28L11 33.5V30Q7.5 31 7.5 38Z" fill="#5a5a5a"/></svg>
<div style="position:absolute;left:346.66px;top:628.53px;font-size:23px;line-height:23px;height:23px;white-space:nowrap;color:#707070;font-weight:normal;letter-spacing:0.167px;-webkit-text-stroke:0.45px #707070;">Elevations</div>
<svg style="position:absolute;left:333px;top:663px;" width="34" height="30" viewBox="0 0 34 30"><path d="M2 9.0 L17.0 4 L32 9.0 L32 28 L2 28 Z" fill="none" stroke="#8db2ff" stroke-width="2.2" stroke-linejoin="miter"/></svg>
<div style="position:absolute;left:374.66px;top:668.53px;font-size:23px;line-height:23px;height:23px;white-space:nowrap;color:#707070;font-weight:normal;letter-spacing:0.434px;-webkit-text-stroke:0.45px #707070;">E-01 South Elevation</div>
<svg style="position:absolute;left:333px;top:703px;" width="34" height="30" viewBox="0 0 34 30"><path d="M2 9.0 L17.0 4 L32 9.0 L32 28 L2 28 Z" fill="none" stroke="#8db2ff" stroke-width="2.2" stroke-linejoin="miter"/></svg>
<div style="position:absolute;left:374.66px;top:708.53px;font-size:23px;line-height:23px;height:23px;white-space:nowrap;color:#707070;font-weight:normal;letter-spacing:0.356px;-webkit-text-stroke:0.45px #707070;">E-02 West Elevation</div>
<svg style="position:absolute;left:333px;top:743px;" width="34" height="30" viewBox="0 0 34 30"><path d="M2 9.0 L17.0 4 L32 9.0 L32 28 L2 28 Z" fill="#fff" stroke="#fff" stroke-width="2.2" stroke-linejoin="miter"/></svg>
<div style="position:absolute;left:374.66px;top:748.53px;font-size:23px;line-height:23px;height:23px;white-space:nowrap;color:#fff;font-weight:normal;letter-spacing:0.535px;-webkit-text-stroke:0.45px #fff;font-weight:normal;text-shadow:0 0 0.4px #fff;">E-03 North Elevation</div>
<svg style="position:absolute;left:333px;top:783px;" width="34" height="30" viewBox="0 0 34 30"><path d="M2 9.0 L17.0 4 L32 9.0 L32 28 L2 28 Z" fill="none" stroke="#8db2ff" stroke-width="2.2" stroke-linejoin="miter"/></svg>
<div style="position:absolute;left:374.66px;top:788.53px;font-size:23px;line-height:23px;height:23px;white-space:nowrap;color:#707070;font-weight:normal;letter-spacing:0.300px;-webkit-text-stroke:0.45px #707070;">E-04 East Elevation</div>
<svg style="position:absolute;left:305px;top:823px;" width="34" height="30" viewBox="0 0 34 30"><path d="M2 9.0 L17.0 4 L32 9.0 L32 28 L2 28 Z" fill="none" stroke="#1a5cf0" stroke-width="2.2" stroke-linejoin="miter"/></svg>
<div style="position:absolute;left:346.66px;top:828.53px;font-size:23px;line-height:23px;height:23px;white-space:nowrap;color:#111;font-weight:normal;letter-spacing:0.535px;-webkit-text-stroke:0.45px #111;">E-03 2nd North Elevation</div>
<svg style="position:absolute;left:305px;top:863px;" width="34" height="30" viewBox="0 0 34 30"><path d="M2 9.0 L17.0 4 L32 9.0 L32 28 L2 28 Z" fill="none" stroke="#1a5cf0" stroke-width="2.2" stroke-linejoin="miter"/></svg>
<div style="position:absolute;left:346.66px;top:868.53px;font-size:23px;line-height:23px;height:23px;white-space:nowrap;color:#111;font-weight:normal;letter-spacing:0.543px;-webkit-text-stroke:0.45px #111;">E-03 3rd North Elevation</div>
<svg style="position:absolute;left:307px;top:903px;" width="34" height="34" viewBox="0 0 34 34"><g fill="none" stroke="#8db2ff" stroke-width="2.2"><path d="M4 10H22V24H4Z"/><path d="M22 14L31 8V26L22 20"/><path d="M9 9Q13 3 17 9"/><path d="M6 31Q9 29 12 28"/></g></svg>
<div style="position:absolute;left:354.08px;top:908.53px;font-size:23px;line-height:23px;height:23px;white-space:nowrap;color:#707070;font-weight:normal;letter-spacing:0.568px;-webkit-text-stroke:0.45px #707070;">3D Model</div>
<div style="position:absolute;left:251.5px;top:1211.5px;width:176.5px;height:38.5px;background:#fff;border-radius:7px;box-shadow:0 0 0 1px #c4c4c4,0 1px 1px rgba(0,0,0,0.15);"></div>
<div style="position:absolute;left:303.80px;top:1217.68px;font-size:24px;line-height:24px;height:24px;white-space:nowrap;color:#111;font-weight:normal;letter-spacing:-0.376px;-webkit-text-stroke:0.45px #111;">Cancel</div>
<div style="position:absolute;left:631px;top:1211px;width:178px;height:40px;background:linear-gradient(#62a3f9,#0f62f6);border-radius:7px;box-shadow:0 0 0 1px #2f6fe0;"></div>
<div style="position:absolute;left:701.99px;top:1217.68px;font-size:24px;line-height:24px;height:24px;white-space:nowrap;color:#fff;font-weight:normal;letter-spacing:0.500px;-webkit-text-stroke:0.35px #fff;">OK</div>
<div style="position:absolute;left:1200px;top:631.5px;width:642px;height:912px;background:#ececec;border-radius:10px;box-shadow:0 12px 36px rgba(0,0,0,0.32),0 0 0 1px rgba(0,0,0,0.10);"></div>
<div style="position:absolute;left:1200px;top:732px;width:642px;height:3px;background:#d6d6d6;"></div>
<div style="position:absolute;left:1200px;top:869.5px;width:642px;height:3px;background:#d6d6d6;"></div>
<div style="position:absolute;left:1200px;top:1068.5px;width:642px;height:3px;background:#d6d6d6;"></div>
<div style="position:absolute;left:1200px;top:1130.5px;width:642px;height:3px;background:#d6d6d6;"></div>
<div style="position:absolute;left:1200px;top:1192.5px;width:642px;height:3px;background:#d6d6d6;"></div>
<div style="position:absolute;left:1200px;top:1254px;width:642px;height:3px;background:#d6d6d6;"></div>
<div style="position:absolute;left:1200px;top:1322.5px;width:642px;height:3px;background:#d6d6d6;"></div>
<div style="position:absolute;left:1200px;top:1472px;width:642px;height:3px;background:#d6d6d6;"></div>
<div style="position:absolute;left:1200px;top:784.5px;width:642px;height:37px;background:#4a89f7;"></div>
<div style="position:absolute;left:1285.42px;top:647.87px;font-size:28.5px;line-height:28.5px;height:28.5px;white-space:nowrap;color:#222;font-weight:normal;letter-spacing:0.186px;-webkit-text-stroke:0.80px #222;">Elevation Selection Settings</div>
<div style="position:absolute;left:1241.92px;top:687.87px;font-size:28.5px;line-height:28.5px;height:28.5px;white-space:nowrap;color:#222;font-weight:normal;letter-spacing:0.413px;-webkit-text-stroke:0.80px #222;">Select &amp; Activate Tool</div>
<div style="position:absolute;left:1241.92px;top:749.37px;font-size:28.5px;line-height:28.5px;height:28.5px;white-space:nowrap;color:#222;font-weight:normal;letter-spacing:0.490px;-webkit-text-stroke:0.80px #222;">Open with current settings</div>
<div style="position:absolute;left:1243.06px;top:786.87px;font-size:28.5px;line-height:28.5px;height:28.5px;white-space:nowrap;color:#fff;font-weight:normal;letter-spacing:0.301px;-webkit-text-stroke:0.80px #fff;">Views from this Elevation</div>
<div style="position:absolute;left:1241.92px;top:825.87px;font-size:28.5px;line-height:28.5px;height:28.5px;white-space:nowrap;color:#222;font-weight:normal;letter-spacing:0.031px;-webkit-text-stroke:0.80px #222;">Show as Trace Reference</div>
<div style="position:absolute;left:1286.08px;top:891.37px;font-size:28.5px;line-height:28.5px;height:28.5px;white-space:nowrap;color:#222;font-weight:normal;letter-spacing:0.625px;-webkit-text-stroke:0.80px #222;">Cut</div>
<div style="position:absolute;left:1286.08px;top:935.37px;font-size:28.5px;line-height:28.5px;height:28.5px;white-space:nowrap;color:#222;font-weight:normal;letter-spacing:0.007px;-webkit-text-stroke:0.80px #222;">Copy</div>
<div style="position:absolute;left:1285.22px;top:979.37px;font-size:28.5px;line-height:28.5px;height:28.5px;white-space:nowrap;color:#222;font-weight:normal;letter-spacing:0.186px;-webkit-text-stroke:0.80px #222;">Paste</div>
<div style="position:absolute;left:1280.72px;top:1021.37px;font-size:28.5px;line-height:28.5px;height:28.5px;white-space:nowrap;color:#222;font-weight:normal;letter-spacing:0.639px;-webkit-text-stroke:0.80px #222;">Delete</div>
<div style="position:absolute;left:1240.72px;top:1085.87px;font-size:28.5px;line-height:28.5px;height:28.5px;white-space:nowrap;color:#222;font-weight:normal;letter-spacing:0.960px;-webkit-text-stroke:0.80px #222;">Move</div>
<div style="position:absolute;left:1240.72px;top:1148.37px;font-size:28.5px;line-height:28.5px;height:28.5px;white-space:nowrap;color:#222;font-weight:normal;letter-spacing:0.214px;-webkit-text-stroke:0.80px #222;">Display Order</div>
<div style="position:absolute;left:1240.72px;top:1209.87px;font-size:28.5px;line-height:28.5px;height:28.5px;white-space:nowrap;color:#222;font-weight:normal;letter-spacing:0.156px;-webkit-text-stroke:0.80px #222;">Layers</div>
<div style="position:absolute;left:1286.08px;top:1275.87px;font-size:28.5px;line-height:28.5px;height:28.5px;white-space:nowrap;color:#222;font-weight:normal;letter-spacing:0.425px;-webkit-text-stroke:0.80px #222;">Connect</div>
<div style="position:absolute;left:1281.22px;top:1341.87px;font-size:28.5px;line-height:28.5px;height:28.5px;white-space:nowrap;color:#222;font-weight:normal;letter-spacing:0.232px;-webkit-text-stroke:0.80px #222;">Show Selection/Marquee in 3D</div>
<div style="position:absolute;left:1281.22px;top:1383.37px;font-size:28.5px;line-height:28.5px;height:28.5px;white-space:nowrap;color:#222;font-weight:normal;letter-spacing:0.299px;-webkit-text-stroke:0.80px #222;">Show All in 3D</div>
<div style="position:absolute;left:1281.22px;top:1424.87px;font-size:28.5px;line-height:28.5px;height:28.5px;white-space:nowrap;color:#222;font-weight:normal;letter-spacing:0.220px;-webkit-text-stroke:0.80px #222;">Show Stored Selection/Marquee in 3D</div>
<div style="position:absolute;left:1200px;top:1476px;width:642px;height:31px;overflow:hidden;">
<div style="position:absolute;left:86.08px;top:14.87px;font-size:28.5px;line-height:28.5px;height:28.5px;white-space:nowrap;color:#222;font-weight:normal;letter-spacing:0.006px;-webkit-text-stroke:0.80px #222;">Crop Zone</div>
</div>
<svg style="position:absolute;left:0px;top:0px;pointer-events:none" width="2458" height="1556" viewBox="0 0 2458 1556"><g fill="none" stroke="#222" stroke-width="2.1"><path d="M1780.8 655.0V668.0M1787.2 655.0V668.0M1777.5 658.3H1790.5M1777.5 664.7H1790.5"/><circle cx="1777.5" cy="655.0" r="3.3"/><circle cx="1777.5" cy="668.0" r="3.3"/><circle cx="1790.5" cy="655.0" r="3.3"/><circle cx="1790.5" cy="668.0" r="3.3"/></g></svg>
<div style="position:absolute;left:1798.19px;top:647.87px;font-size:28.5px;line-height:28.5px;height:28.5px;white-space:nowrap;color:#222;font-weight:normal;letter-spacing:0.000px;-webkit-text-stroke:0.80px #222;">T</div>
<svg style="position:absolute;left:0px;top:0px;pointer-events:none" width="2458" height="1556" viewBox="0 0 2458 1556"><g fill="none" stroke="#222" stroke-width="2.1"><path d="M1780.8 898.5V911.5M1787.2 898.5V911.5M1777.5 901.8H1790.5M1777.5 908.2H1790.5"/><circle cx="1777.5" cy="898.5" r="3.3"/><circle cx="1777.5" cy="911.5" r="3.3"/><circle cx="1790.5" cy="898.5" r="3.3"/><circle cx="1790.5" cy="911.5" r="3.3"/></g></svg>
<div style="position:absolute;left:1799.62px;top:891.37px;font-size:28.5px;line-height:28.5px;height:28.5px;white-space:nowrap;color:#222;font-weight:normal;letter-spacing:0.000px;-webkit-text-stroke:0.80px #222;">X</div>
<svg style="position:absolute;left:0px;top:0px;pointer-events:none" width="2458" height="1556" viewBox="0 0 2458 1556"><g fill="none" stroke="#222" stroke-width="2.1"><path d="M1780.8 942.5V955.5M1787.2 942.5V955.5M1777.5 945.8H1790.5M1777.5 952.2H1790.5"/><circle cx="1777.5" cy="942.5" r="3.3"/><circle cx="1777.5" cy="955.5" r="3.3"/><circle cx="1790.5" cy="942.5" r="3.3"/><circle cx="1790.5" cy="955.5" r="3.3"/></g></svg>
<div style="position:absolute;left:1798.62px;top:935.37px;font-size:28.5px;line-height:28.5px;height:28.5px;white-space:nowrap;color:#222;font-weight:normal;letter-spacing:0.000px;-webkit-text-stroke:0.80px #222;">C</div>
<svg style="position:absolute;left:0px;top:0px;pointer-events:none" width="2458" height="1556" viewBox="0 0 2458 1556"><g fill="none" stroke="#222" stroke-width="2.1"><path d="M1780.8 986.5V999.5M1787.2 986.5V999.5M1777.5 989.8H1790.5M1777.5 996.2H1790.5"/><circle cx="1777.5" cy="986.5" r="3.3"/><circle cx="1777.5" cy="999.5" r="3.3"/><circle cx="1790.5" cy="986.5" r="3.3"/><circle cx="1790.5" cy="999.5" r="3.3"/></g></svg>
<div style="position:absolute;left:1798.19px;top:979.37px;font-size:28.5px;line-height:28.5px;height:28.5px;white-space:nowrap;color:#222;font-weight:normal;letter-spacing:0.000px;-webkit-text-stroke:0.80px #222;">V</div>
<div style="position:absolute;left:1796.78px;top:1347.80px;font-size:21.5px;line-height:21.5px;height:21.5px;white-space:nowrap;color:#222;font-weight:normal;letter-spacing:1.817px;-webkit-text-stroke:0.60px #222;">F4</div>
<div style="position:absolute;left:1796.78px;top:1389.30px;font-size:21.5px;line-height:21.5px;height:21.5px;white-space:nowrap;color:#222;font-weight:normal;letter-spacing:1.817px;-webkit-text-stroke:0.60px #222;">F4</div>
<svg style="position:absolute;left:0px;top:0px;pointer-events:none" width="2458" height="1556" viewBox="0 0 2458 1556"><g fill="none" stroke="#222" stroke-width="2.1"><path d="M1781.3 1390.5V1403.5M1787.7 1390.5V1403.5M1778.0 1393.8H1791.0M1778.0 1400.2H1791.0"/><circle cx="1778.0" cy="1390.5" r="3.3"/><circle cx="1778.0" cy="1403.5" r="3.3"/><circle cx="1791.0" cy="1390.5" r="3.3"/><circle cx="1791.0" cy="1403.5" r="3.3"/></g></svg>
<svg style="position:absolute;left:1800px;top:793px;" width="18" height="20" viewBox="0 0 18 20"><path d="M0 0V20L17 10Z" fill="#fff"/></svg>
<svg style="position:absolute;left:1800px;top:1090px;" width="18" height="20" viewBox="0 0 18 20"><path d="M0 0V20L17 10Z" fill="#222"/></svg>
<svg style="position:absolute;left:1800px;top:1152.5px;" width="18" height="20" viewBox="0 0 18 20"><path d="M0 0V20L17 10Z" fill="#222"/></svg>
<svg style="position:absolute;left:1800px;top:1214.5px;" width="18" height="20" viewBox="0 0 18 20"><path d="M0 0V20L17 10Z" fill="#222"/></svg>
<svg style="position:absolute;left:1800px;top:1280px;" width="18" height="20" viewBox="0 0 18 20"><path d="M0 0V20L17 10Z" fill="#222"/></svg>
<svg style="position:absolute;left:1511px;top:1516px;" width="19" height="15" viewBox="0 0 19 15"><path d="M0 0H19L9.5 15Z" fill="#222"/></svg>
<svg style="position:absolute;left:1242px;top:642px;" width="38" height="36" viewBox="0 0 38 36"><g fill="none" stroke="#222" stroke-width="2.2"><path d="M2 35V2H35V31H14"/><path d="M2 2H35" stroke-width="3.5"/><path d="M14 13L21 7L31 17L25 22Z"/><path d="M17 16L4 30L7 33L20 19"/></g></svg>
<svg style="position:absolute;left:1243px;top:889px;" width="32" height="32" viewBox="0 0 32 32"><g fill="none" stroke="#222" stroke-width="2"><path d="M4 2L22 22M26 2L8 22"/><circle cx="6" cy="26" r="4"/><circle cx="24" cy="26" r="4"/></g></svg>
<svg style="position:absolute;left:1242px;top:930px;" width="34" height="36" viewBox="0 0 34 36"><g fill="none" stroke="#222" stroke-width="2"><path d="M2 2H10L14 6V28H2Z"/><path d="M13 10H24L32 18V34H13Z"/><path d="M16 22H28M16 26H28M16 30H28M4 14H10M4 18H10M4 22H10"/></g></svg>
<svg style="position:absolute;left:1242px;top:975px;" width="36" height="36" viewBox="0 0 36 36"><g fill="none" stroke="#222" stroke-width="2"><path d="M2 6H32V34H2Z"/><path d="M10 2H24V8H10Z"/><path d="M16 18H34V34H16Z"/><path d="M20 24H30M20 28H30"/></g></svg>
<svg style="position:absolute;left:1242px;top:1023px;" width="30" height="30" viewBox="0 0 30 30"><path d="M2 2L28 28M28 2L2 28" stroke="#222" stroke-width="4" fill="none"/></svg>
<svg style="position:absolute;left:1245px;top:1274px;" width="30" height="28" viewBox="0 0 30 28"><g fill="none" stroke="#222" stroke-width="2"><rect x="2" y="2" width="6" height="6" rx="1.5"/><rect x="22" y="2" width="6" height="6" rx="1.5"/><rect x="2" y="20" width="6" height="6" rx="1.5"/><rect x="22" y="20" width="6" height="6" rx="1.5"/><path d="M8 5H22M8 23H22M5 8V20M25 8V20"/></g></svg>
<svg style="position:absolute;left:1242px;top:1340px;" width="32" height="32" viewBox="0 0 32 32"><rect x="1" y="1" width="30" height="30" fill="none" stroke="#333" stroke-width="1.2" stroke-dasharray="2 2"/><path d="M7 4H24L29 9V29H9L4 24V7Z" fill="#2b2b2b"/></svg>
<svg style="position:absolute;left:1242px;top:1382px;" width="32" height="32" viewBox="0 0 32 32"><path d="M7 4H24L29 9V29H9L4 24V7Z" fill="#2b2b2b"/></svg>
<svg style="position:absolute;left:1242px;top:1423px;" width="32" height="32" viewBox="0 0 32 32"><rect x="1" y="1" width="30" height="30" fill="none" stroke="#333" stroke-width="1.2" stroke-dasharray="2 2"/><path d="M7 4H24L29 9V29H9L4 24V7Z" fill="#2b2b2b"/></svg>
<div style="position:absolute;left:1240px;top:1486px;width:40px;height:21px;overflow:hidden;">
<svg style="position:absolute;left:2px;top:2px;" width="32" height="30" viewBox="0 0 32 30"><g fill="none" stroke="#222" stroke-width="1.9"><path d="M3 13L20 5L31 9L14 18Z"/><path d="M3 13V22M14 18V26M31 9V14M8 26L24 12"/></g></svg>
</div>
<div style="position:absolute;left:1842.5px;top:776px;width:409.5px;height:154px;background:#ececec;border-radius:10px;box-shadow:0 12px 36px rgba(0,0,0,0.32),0 0 0 1px rgba(0,0,0,0.10);"></div>
<div style="position:absolute;left:1842.5px;top:869.5px;width:409.5px;height:3px;background:#d6d6d6;"></div>
<div style="position:absolute;left:1842.5px;top:884px;width:409.5px;height:37.5px;background:#4a89f7;"></div>
<div style="position:absolute;left:1882.72px;top:786.87px;font-size:28.5px;line-height:28.5px;height:28.5px;white-space:nowrap;color:#222;font-weight:normal;letter-spacing:0.591px;-webkit-text-stroke:0.80px #222;">E-03 North Elevation</div>
<div style="position:absolute;left:1882.72px;top:825.37px;font-size:28.5px;line-height:28.5px;height:28.5px;white-space:nowrap;color:#222;font-weight:normal;letter-spacing:0.593px;-webkit-text-stroke:0.80px #222;">E-03 2nd North Elevation</div>
<div style="position:absolute;left:1884.86px;top:886.87px;font-size:28.5px;line-height:28.5px;height:28.5px;white-space:nowrap;color:#fff;font-weight:normal;letter-spacing:-0.066px;-webkit-text-stroke:0.80px #fff;">All Related Views...</div>
<div style="position:absolute;left:2px;top:2px;width:2454px;height:1552px;border-radius:10px;box-shadow:inset 0 0 0 1px rgba(255,255,255,0.55);pointer-events:none;"></div></body></html>
